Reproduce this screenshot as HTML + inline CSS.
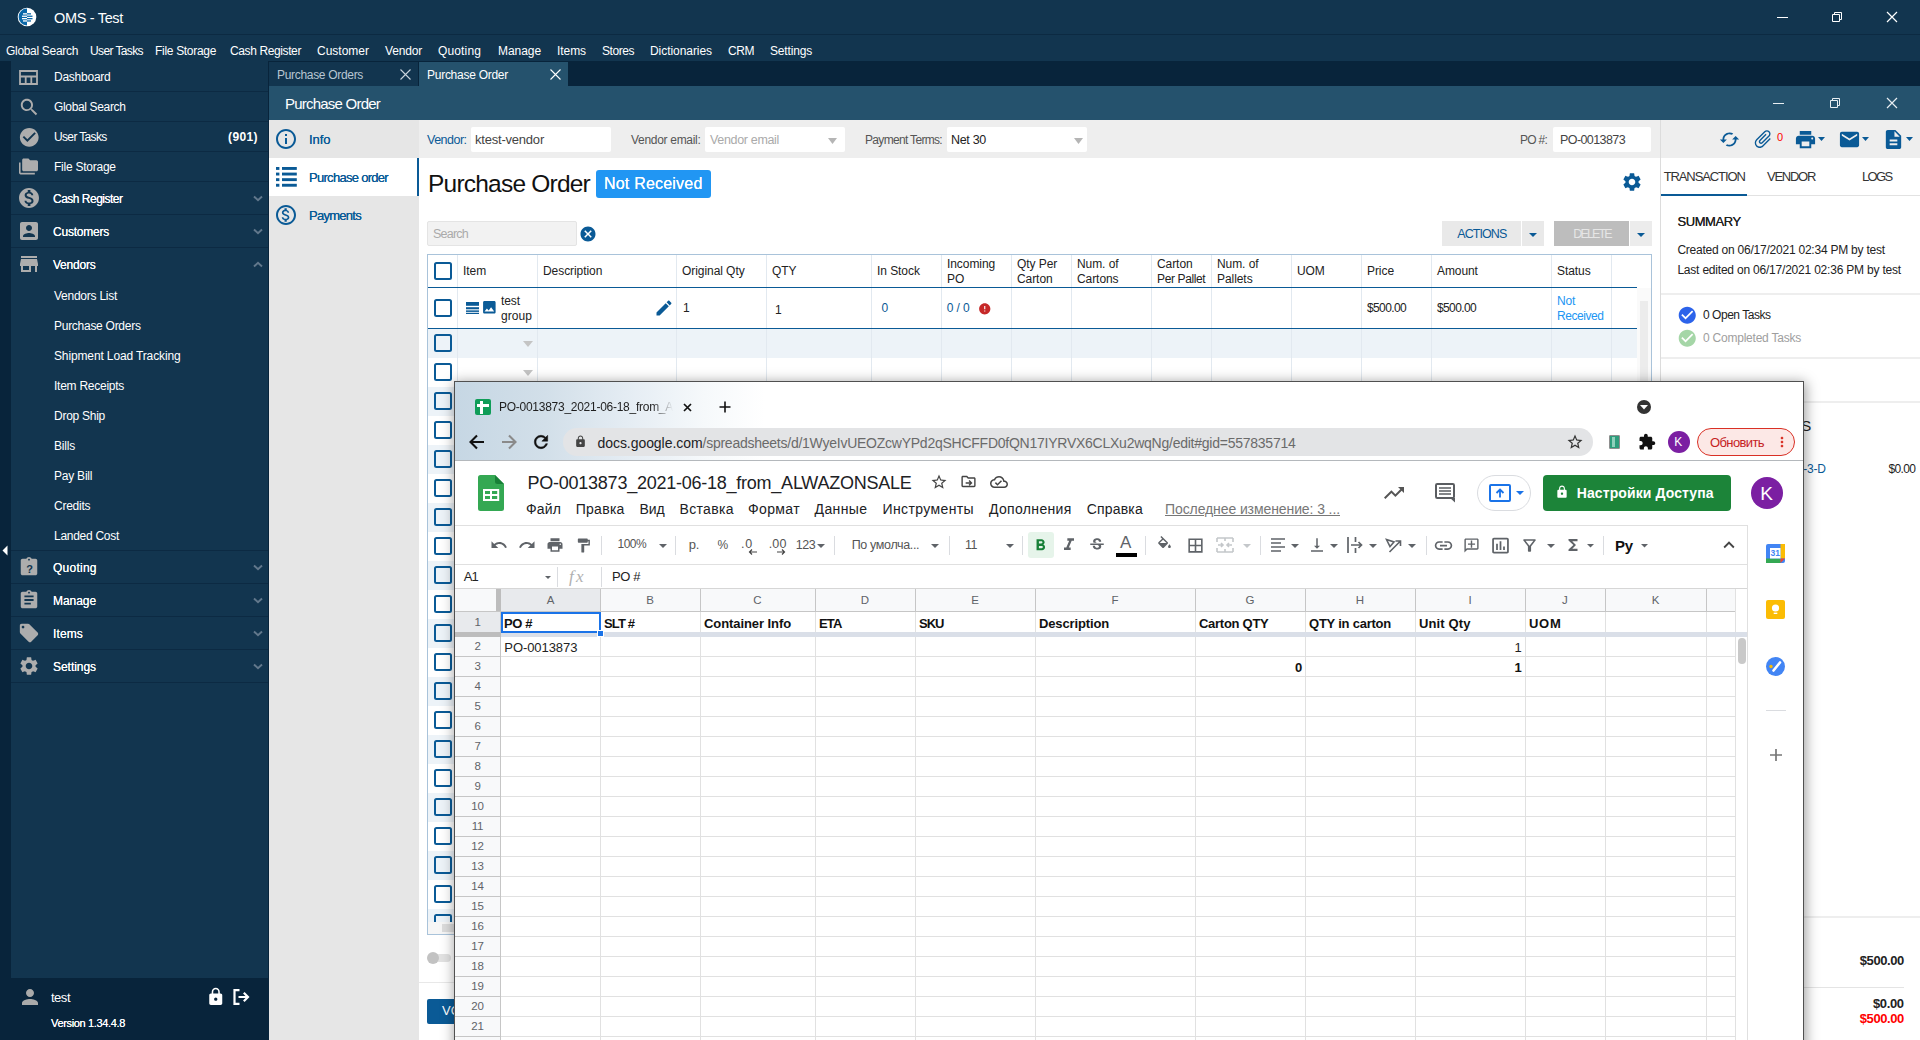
<!DOCTYPE html><html lang="en"><head><meta charset="utf-8"><title>OMS - Test</title><style>
html,body{margin:0;padding:0;}
body{width:1920px;height:1040px;overflow:hidden;position:relative;background:#12354f;font-family:"Liberation Sans",sans-serif;font-size:12px;}
.b{position:absolute;box-sizing:border-box;}
.t{position:absolute;white-space:nowrap;}
.i{position:absolute;display:block;}
#root{position:absolute;left:0;top:0;width:1920px;height:1040px;overflow:hidden;}
</style></head><body><div id="root">
<div class="b" style="left:0px;top:0px;width:1920px;height:35px;background:#12354f;border-bottom:1px solid #0c2a42;"></div>
<svg class="i" style="left:17px;top:7px" width="20" height="20" viewBox="0 0 20 20"><circle cx="10" cy="10" r="9.3" fill="#fff"/><path d="M10 1.6A8.4 8.4 0 0 0 10 18.4z" fill="#0a67a8"/><rect x="6" y="6.2" width="8" height="1.3" fill="#fff"/><rect x="5" y="8.6" width="10.5" height="1.3" fill="#fff"/><rect x="5" y="11" width="10.5" height="1.3" fill="#fff"/><rect x="6" y="13.3" width="8" height="1.3" fill="#fff"/><rect x="10" y="6.2" width="4" height="1.3" fill="#0a67a8"/><rect x="10" y="8.6" width="5.5" height="1.3" fill="#0a67a8"/><rect x="10" y="11" width="5.500" height="1.3" fill="#0a67a8"/><rect x="10" y="13.3" width="4" height="1.3" fill="#0a67a8"/></svg>
<span class="t" style="top:8.0px;font-size:14.5px;line-height:20px;color:#fff;left:54.0px;letter-spacing:-0.325px;">OMS - Test</span>
<div class="b" style="left:1777px;top:17px;width:11px;height:1px;background:#fff;"></div><svg class="i" style="left:1831px;top:11px" width="12" height="12" viewBox="0 0 12 12"><path d="M1.500 3.500h7v7h-7z M3.500 3.500v-2h7v7h-2" fill="none" stroke="#fff" stroke-width="1"/></svg><svg class="i" style="left:1886px;top:11px" width="12" height="12" viewBox="0 0 12 12"><path d="M1 1l10 10M11 1L1 11" fill="none" stroke="#fff" stroke-width="1.2"/></svg>
<span class="t" style="top:42.5px;font-size:12px;line-height:17px;color:#fff;left:6.0px;letter-spacing:-0.311px;">Global Search</span>
<span class="t" style="top:42.5px;font-size:12px;line-height:17px;color:#fff;left:90.0px;letter-spacing:-0.613px;">User Tasks</span>
<span class="t" style="top:42.5px;font-size:12px;line-height:17px;color:#fff;left:155.0px;letter-spacing:-0.308px;">File Storage</span>
<span class="t" style="top:42.5px;font-size:12px;line-height:17px;color:#fff;left:230.0px;letter-spacing:-0.387px;">Cash Register</span>
<span class="t" style="top:42.5px;font-size:12px;line-height:17px;color:#fff;left:317.0px;">Customer</span>
<span class="t" style="top:42.5px;font-size:12px;line-height:17px;color:#fff;left:385.0px;letter-spacing:-0.172px;">Vendor</span>
<span class="t" style="top:42.5px;font-size:12px;line-height:17px;color:#fff;left:438.0px;letter-spacing:0.139px;">Quoting</span>
<span class="t" style="top:42.5px;font-size:12px;line-height:17px;color:#fff;left:498.0px;letter-spacing:-0.061px;">Manage</span>
<span class="t" style="top:42.5px;font-size:12px;line-height:17px;color:#fff;left:557.0px;letter-spacing:-0.068px;">Items</span>
<span class="t" style="top:42.5px;font-size:12px;line-height:17px;color:#fff;left:602.0px;letter-spacing:-0.447px;">Stores</span>
<span class="t" style="top:42.5px;font-size:12px;line-height:17px;color:#fff;left:650.0px;letter-spacing:-0.057px;">Dictionaries</span>
<span class="t" style="top:42.5px;font-size:12px;line-height:17px;color:#fff;left:728.0px;letter-spacing:-0.443px;">CRM</span>
<span class="t" style="top:42.5px;font-size:12px;line-height:17px;color:#fff;left:770.0px;letter-spacing:-0.170px;">Settings</span>
<div class="b" style="left:0px;top:61px;width:1920px;height:979px;background:#08243b;"></div>
<div class="b" style="left:11px;top:61px;width:257px;height:917px;background:#12354f;"></div>
<svg class="i" style="left:2px;top:545px" width="6" height="11" viewBox="0 0 6 11"><path d="M5.500 0.500v10L0.500 5.500z" fill="#fff"/></svg>
<div class="b" style="left:11px;top:91px;width:257px;height:1px;background:#0c2a43;"></div>
<span class="t" style="top:68.5px;font-size:12px;line-height:17px;color:#fff;left:54.0px;letter-spacing:-0.245px;">Dashboard</span>
<svg class="i" style="left:19px;top:69.5px" width="19" height="15" viewBox="0 0 19 15"><path d="M1 1h17v13H1z M1 6.500h17 M6.700 6.500v7.500 M12.300 6.500v7.500" fill="none" stroke="#adadad" stroke-width="1.800"/></svg>
<div class="b" style="left:11px;top:121px;width:257px;height:1px;background:#0c2a43;"></div>
<span class="t" style="top:98.5px;font-size:12px;line-height:17px;color:#fff;left:54.0px;letter-spacing:-0.349px;">Global Search</span>
<svg class="i" style="left:17.5px;top:95.5px;" width="22.5" height="22.5" viewBox="0 0 24 24"><path fill="#adadad" d="M15.5 14h-.79l-.28-.27C15.41 12.59 16 11.11 16 9.5 16 5.91 13.09 3 9.5 3S3 5.91 3 9.5 5.91 16 9.5 16c1.61 0 3.09-.59 4.23-1.57l.27.28v.79l5 4.99L20.49 19l-4.99-5zm-6 0C7.01 14 5 11.99 5 9.5S7.01 5 9.5 5 14 7.01 14 9.5 11.99 14 9.5 14z"/></svg>
<div class="b" style="left:11px;top:151px;width:257px;height:1px;background:#0c2a43;"></div>
<span class="t" style="top:128.5px;font-size:12px;line-height:17px;color:#fff;left:54.0px;letter-spacing:-0.653px;">User Tasks</span>
<svg class="i" style="left:17.5px;top:125.5px;" width="22.5" height="22.5" viewBox="0 0 24 24"><path fill="#adadad" d="M12 2C6.48 2 2 6.48 2 12s4.48 10 10 10 10-4.48 10-10S17.52 2 12 2zm-2 15l-5-5 1.41-1.41L10 14.17l7.59-7.59L19 8l-9 9z"/></svg>
<div class="b" style="left:11px;top:181px;width:257px;height:1px;background:#0c2a43;"></div>
<span class="t" style="top:158.5px;font-size:12px;line-height:17px;color:#fff;left:54.0px;letter-spacing:-0.243px;">File Storage</span>
<svg class="i" style="left:19px;top:157px;" width="19" height="19" viewBox="0 0 24 24"><path fill="#adadad" d="M2 7H0v13c0 1.1.9 2 2 2h18v-2H2V7zm20-3h-8l-2-2H6c-1.1 0-2 .9-2 2v12c0 1.1.9 2 2 2h16c1.1 0 2-.9 2-2V6c0-1.1-.9-2-2-2z"/></svg>
<span class="t" style="top:128.5px;font-size:12px;line-height:17px;color:#fff;left:228.0px;letter-spacing:0.397px;font-weight:700;">(901)</span>
<div class="b" style="left:11px;top:214px;width:257px;height:1px;background:#0c2a43;"></div>
<span class="t" style="top:191.0px;font-size:12px;line-height:17px;color:#fff;left:53.0px;letter-spacing:-0.502px;text-shadow:0 0 0.4px #fff;">Cash Register</span>
<svg class="i" style="left:17px;top:186px;" width="24" height="24" viewBox="0 0 24 24"><path fill="#adadad" d="M12 2C6.48 2 2 6.48 2 12s4.48 10 10 10 10-4.48 10-10S17.52 2 12 2zm1.41 16.09V20h-2.67v-1.93c-1.71-.36-3.16-1.46-3.27-3.4h1.96c.1 1.05.82 1.87 2.65 1.87 1.96 0 2.4-.98 2.4-1.59 0-.83-.44-1.61-2.67-2.14-2.48-.6-4.18-1.62-4.18-3.67 0-1.72 1.39-2.84 3.11-3.21V4h2.67v1.95c1.86.45 2.79 1.86 2.85 3.39H14.3c-.05-1.11-.64-1.87-2.22-1.87-1.5 0-2.4.68-2.4 1.64 0 .84.65 1.39 2.67 1.91s4.18 1.39 4.18 3.91c-.01 1.83-1.38 2.83-3.12 3.16z"/></svg>
<svg class="i" style="left:252.5px;top:195px" width="10" height="7" viewBox="0 0 10 7"><path d="M1 1.500L5 5.300L9 1.500" fill="none" stroke="#62788c" stroke-width="1.900"/></svg>
<div class="b" style="left:11px;top:247px;width:257px;height:1px;background:#0c2a43;"></div>
<span class="t" style="top:224.0px;font-size:12px;line-height:17px;color:#fff;left:53.0px;letter-spacing:-0.226px;text-shadow:0 0 0.4px #fff;">Customers</span>
<svg class="i" style="left:17px;top:219px;" width="24" height="24" viewBox="0 0 24 24"><path fill="#adadad" d="M3 5v14c0 1.1.89 2 2 2h14c1.1 0 2-.9 2-2V5c0-1.1-.9-2-2-2H5c-1.11 0-2 .9-2 2zm12 4c0 1.66-1.34 3-3 3s-3-1.34-3-3 1.34-3 3-3 3 1.34 3 3zm-9 8c0-2 4-3.1 6-3.1s6 1.1 6 3.1v1H6v-1z"/></svg>
<svg class="i" style="left:252.5px;top:228px" width="10" height="7" viewBox="0 0 10 7"><path d="M1 1.500L5 5.300L9 1.500" fill="none" stroke="#62788c" stroke-width="1.900"/></svg>
<span class="t" style="top:257.0px;font-size:12px;line-height:17px;color:#fff;left:53.0px;letter-spacing:-0.220px;text-shadow:0 0 0.4px #fff;">Vendors</span>
<svg class="i" style="left:17px;top:252px;" width="24" height="24" viewBox="0 0 24 24"><path fill="#adadad" d="M20 4H4v2h16V4zm1 10v-2l-1-5H4l-1 5v2h1v6h10v-6h4v6h2v-6h1zm-9 4H6v-4h6v4z"/></svg>
<svg class="i" style="left:252.5px;top:261px" width="10" height="7" viewBox="0 0 10 7"><path d="M1 5.500L5 1.700L9 5.500" fill="none" stroke="#62788c" stroke-width="1.900"/></svg>
<span class="t" style="top:287.5px;font-size:12px;line-height:17px;color:#fff;left:54.0px;letter-spacing:-0.248px;">Vendors List</span>
<span class="t" style="top:317.5px;font-size:12px;line-height:17px;color:#fff;left:54.0px;letter-spacing:-0.272px;">Purchase Orders</span>
<span class="t" style="top:347.5px;font-size:12px;line-height:17px;color:#fff;left:54.0px;letter-spacing:-0.132px;">Shipment Load Tracking</span>
<span class="t" style="top:377.5px;font-size:12px;line-height:17px;color:#fff;left:54.0px;letter-spacing:-0.254px;">Item Receipts</span>
<span class="t" style="top:407.5px;font-size:12px;line-height:17px;color:#fff;left:54.0px;letter-spacing:-0.267px;">Drop Ship</span>
<span class="t" style="top:437.5px;font-size:12px;line-height:17px;color:#fff;left:54.0px;letter-spacing:-0.198px;">Bills</span>
<span class="t" style="top:467.5px;font-size:12px;line-height:17px;color:#fff;left:54.0px;letter-spacing:-0.225px;">Pay Bill</span>
<span class="t" style="top:497.5px;font-size:12px;line-height:17px;color:#fff;left:54.0px;letter-spacing:-0.244px;">Credits</span>
<span class="t" style="top:527.5px;font-size:12px;line-height:17px;color:#fff;left:54.0px;letter-spacing:-0.278px;">Landed Cost</span>
<div class="b" style="left:11px;top:550px;width:257px;height:1px;background:#0c2a43;"></div>
<div class="b" style="left:11px;top:583px;width:257px;height:1px;background:#0c2a43;"></div>
<span class="t" style="top:560.0px;font-size:12px;line-height:17px;color:#fff;left:53.0px;letter-spacing:0.239px;text-shadow:0 0 0.4px #fff;">Quoting</span>
<svg class="i" style="left:18px;top:556px;" width="22" height="22" viewBox="0 0 24 24"><path fill="#adadad" d="M19 3h-4.18C14.4 1.84 13.3 1 12 1c-1.3 0-2.4.84-2.82 2H5c-1.1 0-2 .9-2 2v14c0 1.1.9 2 2 2h14c1.1 0 2-.9 2-2V5c0-1.1-.9-2-2-2zm-7 0c.55 0 1 .45 1 1s-.45 1-1 1-1-.45-1-1 .45-1 1-1z"/></svg>
<span class="t" style="top:562.0px;font-size:11px;line-height:15px;color:#12354f;left:26.2px;font-weight:700;">?</span>
<svg class="i" style="left:252.5px;top:564px" width="10" height="7" viewBox="0 0 10 7"><path d="M1 1.500L5 5.300L9 1.500" fill="none" stroke="#62788c" stroke-width="1.900"/></svg>
<div class="b" style="left:11px;top:616px;width:257px;height:1px;background:#0c2a43;"></div>
<span class="t" style="top:593.0px;font-size:12px;line-height:17px;color:#fff;left:53.0px;letter-spacing:-0.061px;text-shadow:0 0 0.4px #fff;">Manage</span>
<svg class="i" style="left:18px;top:589px;" width="22" height="22" viewBox="0 0 24 24"><path fill="#adadad" d="M19 3h-4.18C14.4 1.84 13.3 1 12 1c-1.3 0-2.4.84-2.82 2H5c-1.1 0-2 .9-2 2v14c0 1.1.9 2 2 2h14c1.1 0 2-.9 2-2V5c0-1.1-.9-2-2-2zm-7 0c.55 0 1 .45 1 1s-.45 1-1 1-1-.45-1-1 .45-1 1-1zm2 14H7v-2h7v2zm3-4H7v-2h10v2zm0-4H7V7h10v2z"/></svg>
<svg class="i" style="left:252.5px;top:597px" width="10" height="7" viewBox="0 0 10 7"><path d="M1 1.500L5 5.300L9 1.500" fill="none" stroke="#62788c" stroke-width="1.900"/></svg>
<div class="b" style="left:11px;top:649px;width:257px;height:1px;background:#0c2a43;"></div>
<span class="t" style="top:626.0px;font-size:12px;line-height:17px;color:#fff;left:53.0px;letter-spacing:0.132px;text-shadow:0 0 0.4px #fff;">Items</span>
<svg class="i" style="left:18px;top:622px;" width="22" height="22" viewBox="0 0 24 24"><path fill="#adadad" d="M21.41 11.58l-9-9C12.05 2.22 11.55 2 11 2H4c-1.1 0-2 .9-2 2v7c0 .55.22 1.05.59 1.42l9 9c.36.36.86.58 1.41.58.55 0 1.05-.22 1.41-.59l7-7c.37-.36.59-.86.59-1.41 0-.55-.23-1.06-.59-1.42zM5.5 7C4.67 7 4 6.33 4 5.5S4.67 4 5.5 4 7 4.67 7 5.5 6.33 7 5.5 7z"/></svg>
<svg class="i" style="left:252.5px;top:630px" width="10" height="7" viewBox="0 0 10 7"><path d="M1 1.500L5 5.300L9 1.500" fill="none" stroke="#62788c" stroke-width="1.900"/></svg>
<div class="b" style="left:11px;top:682px;width:257px;height:1px;background:#0c2a43;"></div>
<span class="t" style="top:659.0px;font-size:12px;line-height:17px;color:#fff;left:53.0px;letter-spacing:-0.045px;text-shadow:0 0 0.4px #fff;">Settings</span>
<svg class="i" style="left:18px;top:655px;" width="22" height="22" viewBox="0 0 24 24"><path fill="#adadad" d="M19.14 12.94c.04-.3.06-.61.06-.94 0-.32-.02-.64-.07-.94l2.03-1.58c.18-.14.23-.41.12-.61l-1.92-3.32c-.12-.22-.37-.29-.59-.22l-2.39.96c-.5-.38-1.03-.7-1.62-.94l-.36-2.54c-.04-.24-.24-.41-.48-.41h-3.84c-.24 0-.43.17-.47.41l-.36 2.54c-.59.24-1.13.57-1.62.94l-2.39-.96c-.22-.08-.47 0-.59.22L2.74 8.87c-.12.21-.08.47.12.61l2.03 1.58c-.05.3-.09.63-.09.94s.02.64.07.94l-2.03 1.58c-.18.14-.23.41-.12.61l1.92 3.32c.12.22.37.29.59.22l2.39-.96c.5.38 1.03.7 1.62.94l.36 2.54c.05.24.24.41.48.41h3.84c.24 0 .44-.17.47-.41l.36-2.54c.59-.24 1.13-.56 1.62-.94l2.39.96c.22.08.47 0 .59-.22l1.92-3.32c.12-.22.07-.47-.12-.61l-2.01-1.58zM12 15.6c-1.98 0-3.6-1.62-3.6-3.6s1.62-3.6 3.6-3.6 3.6 1.62 3.6 3.6-1.62 3.6-3.6 3.6z"/></svg>
<svg class="i" style="left:252.5px;top:663px" width="10" height="7" viewBox="0 0 10 7"><path d="M1 1.500L5 5.300L9 1.500" fill="none" stroke="#62788c" stroke-width="1.900"/></svg>
<svg class="i" style="left:18px;top:985px;" width="24" height="24" viewBox="0 0 24 24"><path fill="#aaaaaa" d="M12 12c2.21 0 4-1.79 4-4s-1.79-4-4-4-4 1.79-4 4 1.79 4 4 4zm0 2c-2.67 0-8 1.34-8 4v2h16v-2c0-2.66-5.33-4-8-4z"/></svg>
<span class="t" style="top:989.0px;font-size:13px;line-height:18px;color:#fff;left:51.0px;letter-spacing:-0.488px;">test</span>
<span class="t" style="top:1016.0px;font-size:11px;line-height:15px;color:#fff;left:51.0px;letter-spacing:-0.344px;text-shadow:0 0 0.3px #fff;">Version 1.34.4.8</span>
<svg class="i" style="left:205.5px;top:986.5px;" width="19.5" height="19.5" viewBox="0 0 24 24"><path fill="#fff" d="M18 8h-1V6c0-2.76-2.24-5-5-5S7 3.24 7 6v2H6c-1.1 0-2 .9-2 2v10c0 1.1.9 2 2 2h12c1.1 0 2-.9 2-2V10c0-1.1-.9-2-2-2zm-6 9c-1.1 0-2-.9-2-2s.9-2 2-2 2 .9 2 2-.9 2-2 2zm3.1-9H8.9V6c0-1.71 1.39-3.1 3.1-3.1 1.71 0 3.1 1.39 3.1 3.1v2z"/></svg>
<svg class="i" style="left:233px;top:989px" width="18" height="16" viewBox="0 0 18 16"><path d="M6.500 1.200H1.500v13.600h5" fill="none" stroke="#fff" stroke-width="2.200"/><path d="M5.500 8h9 M10.800 3.800L15 8l-4.200 4.200" fill="none" stroke="#fff" stroke-width="2.200"/></svg>
<div class="b" style="left:269px;top:62px;width:149px;height:24px;background:#12354f;"></div>
<span class="t" style="top:66.5px;font-size:12px;line-height:17px;color:#b8c6d2;left:277.0px;letter-spacing:-0.314px;">Purchase Orders</span>
<svg class="i" style="left:400px;top:69px" width="11" height="11" viewBox="0 0 11 11"><path d="M0.500 0.500l10 10M10.500 0.500l-10 10" stroke="#c9d4dd" stroke-width="1.100" fill="none"/></svg>
<div class="b" style="left:419px;top:62px;width:149px;height:24px;background:#25526d;"></div>
<span class="t" style="top:66.5px;font-size:12px;line-height:17px;color:#fff;left:427.0px;letter-spacing:-0.265px;">Purchase Order</span>
<svg class="i" style="left:550px;top:69px" width="11" height="11" viewBox="0 0 11 11"><path d="M0.500 0.500l10 10M10.500 0.500l-10 10" stroke="#fff" stroke-width="1.100" fill="none"/></svg>
<div class="b" style="left:269px;top:86px;width:1651px;height:34px;background:#25526d;"></div>
<span class="t" style="top:93.0px;font-size:15px;line-height:21px;color:#fff;left:285.0px;letter-spacing:-0.777px;">Purchase Order</span>
<div class="b" style="left:1773px;top:103px;width:11px;height:1px;background:#e8eef2;"></div><svg class="i" style="left:1829px;top:97px" width="12" height="12" viewBox="0 0 12 12"><path d="M1.500 3.500h7v7h-7z M3.500 3.500v-2h7v7h-2" fill="none" stroke="#e8eef2" stroke-width="1"/></svg><svg class="i" style="left:1886px;top:97px" width="12" height="12" viewBox="0 0 12 12"><path d="M1 1l10 10M11 1L1 11" fill="none" stroke="#e8eef2" stroke-width="1.2"/></svg>
<div class="b" style="left:269px;top:120px;width:150px;height:920px;background:#e6e6e6;"></div>
<div class="b" style="left:269px;top:158px;width:150px;height:38px;background:#fff;border-right:2px solid #0a5a96;"></div>
<svg class="i" style="left:274.3px;top:127px;" width="24" height="24" viewBox="0 0 24 24"><path fill="#0a5a96" d="M11 7h2v2h-2zm0 4h2v6h-2zm1-9C6.48 2 2 6.48 2 12s4.48 10 10 10 10-4.48 10-10S17.52 2 12 2zm0 18c-4.41 0-8-3.59-8-8s3.59-8 8-8 8 3.59 8 8-3.59 8-8 8z"/></svg>
<span class="t" style="top:130.5px;font-size:13px;line-height:18px;color:#0a5a96;left:309.0px;letter-spacing:-0.046px;text-shadow:0 0 0.5px #0a5a96;">Info</span>
<svg class="i" style="left:276px;top:167px" width="21" height="20" viewBox="0 0 21 20"><rect x="0" y="0" width="3.400" height="2.900" fill="#0a5a96"/><rect x="6" y="0" width="14.800" height="2.900" fill="#0a5a96"/><rect x="0" y="5.6" width="3.400" height="2.900" fill="#0a5a96"/><rect x="6" y="5.6" width="14.800" height="2.900" fill="#0a5a96"/><rect x="0" y="11.2" width="3.400" height="2.900" fill="#0a5a96"/><rect x="6" y="11.2" width="14.800" height="2.900" fill="#0a5a96"/><rect x="0" y="16.8" width="3.400" height="2.900" fill="#0a5a96"/><rect x="6" y="16.8" width="14.800" height="2.900" fill="#0a5a96"/></svg>
<span class="t" style="top:168.5px;font-size:13px;line-height:18px;color:#0a5a96;left:309.0px;letter-spacing:-0.706px;text-shadow:0 0 0.5px #0a5a96;">Purchase order</span>
<svg class="i" style="left:274.3px;top:203px;" width="24" height="24" viewBox="0 0 24 24"><path fill="#0a5a96" d="M12 2C6.48 2 2 6.48 2 12s4.48 10 10 10 10-4.48 10-10S17.52 2 12 2zm0 18c-4.41 0-8-3.59-8-8s3.59-8 8-8 8 3.59 8 8-3.59 8-8 8z"/></svg>
<svg class="i" style="left:277.3px;top:206px;" width="18" height="18" viewBox="0 0 24 24"><path fill="#0a5a96" d="M11.8 10.9c-2.27-.59-3-1.2-3-2.15 0-1.09 1.01-1.85 2.7-1.85 1.78 0 2.44.85 2.5 2.1h2.21c-.07-1.72-1.12-3.3-3.21-3.81V3h-3v2.16c-1.94.42-3.5 1.68-3.5 3.61 0 2.31 1.91 3.46 4.7 4.13 2.5.6 3 1.48 3 2.41 0 .69-.49 1.79-2.7 1.79-2.06 0-2.87-.92-2.98-2.1h-2.2c.12 2.19 1.76 3.42 3.68 3.83V21h3v-2.15c1.95-.37 3.5-1.5 3.5-3.55 0-2.84-2.43-3.81-4.7-4.4z"/></svg>
<span class="t" style="top:206.5px;font-size:13px;line-height:18px;color:#0a5a96;left:309.0px;letter-spacing:-0.725px;text-shadow:0 0 0.5px #0a5a96;">Payments</span>
<div class="b" style="left:419px;top:120px;width:1241px;height:920px;background:#fff;"></div>
<div class="b" style="left:419px;top:120px;width:1501px;height:38px;background:#eeeeee;"></div>
<span class="t" style="top:130.5px;font-size:12.5px;line-height:18px;color:#0a5a96;left:427.0px;letter-spacing:-0.513px;">Vendor:</span>
<div class="b" style="left:471px;top:127px;width:140px;height:25px;background:#fff;border-radius:2px;"></div>
<span class="t" style="top:130.5px;font-size:13px;line-height:18px;color:#444;left:475.0px;letter-spacing:-0.211px;">ktest-vendor</span>
<span class="t" style="top:132.0px;font-size:12px;line-height:17px;color:#555;left:631.0px;letter-spacing:-0.298px;">Vendor email:</span>
<div class="b" style="left:705px;top:127px;width:140px;height:25px;background:#fff;border-radius:2px;"></div>
<span class="t" style="top:130.5px;font-size:12.5px;line-height:18px;color:#aaa;left:710.0px;letter-spacing:-0.330px;">Vendor email</span>
<svg class="i" style="left:827.5px;top:137.5px" width="9" height="6" viewBox="0 0 9 6"><path d="M0 0h9L4.5 6z" fill="#b5b5b5"/></svg>
<span class="t" style="top:132.0px;font-size:12px;line-height:17px;color:#555;left:865.0px;letter-spacing:-0.677px;">Payment Terms:</span>
<div class="b" style="left:947px;top:127px;width:140px;height:25px;background:#fff;border-radius:2px;"></div>
<span class="t" style="top:130.5px;font-size:12.5px;line-height:18px;color:#222;left:951.0px;letter-spacing:-0.305px;">Net 30</span>
<svg class="i" style="left:1073.5px;top:137.5px" width="9" height="6" viewBox="0 0 9 6"><path d="M0 0h9L4.5 6z" fill="#b5b5b5"/></svg>
<span class="t" style="top:132.0px;font-size:12px;line-height:17px;color:#555;left:1520.0px;letter-spacing:-0.736px;">PO #:</span>
<div class="b" style="left:1553px;top:127px;width:98px;height:25px;background:#fff;border-radius:2px;"></div>
<span class="t" style="top:130.5px;font-size:12.5px;line-height:18px;color:#444;left:1560.0px;letter-spacing:-0.589px;">PO-0013873</span>
<span class="t" style="top:166.5px;font-size:24.5px;line-height:34px;color:#111;left:428.0px;letter-spacing:-0.781px;">Purchase Order</span>
<div class="b" style="left:596px;top:169.5px;width:115px;height:28px;background:#2196f3;border-radius:3px;"></div>
<span class="t" style="top:173.0px;font-size:16px;line-height:22px;color:#fff;left:604.0px;letter-spacing:0.204px;text-shadow:0 0 0.6px #fff;">Not Received</span>
<svg class="i" style="left:1621px;top:170.5px;" width="22" height="22" viewBox="0 0 24 24"><path fill="#0a5a96" d="M19.14 12.94c.04-.3.06-.61.06-.94 0-.32-.02-.64-.07-.94l2.03-1.58c.18-.14.23-.41.12-.61l-1.92-3.32c-.12-.22-.37-.29-.59-.22l-2.39.96c-.5-.38-1.03-.7-1.62-.94l-.36-2.54c-.04-.24-.24-.41-.48-.41h-3.84c-.24 0-.43.17-.47.41l-.36 2.54c-.59.24-1.13.57-1.62.94l-2.39-.96c-.22-.08-.47 0-.59.22L2.74 8.87c-.12.21-.08.47.12.61l2.03 1.58c-.05.3-.09.63-.09.94s.02.64.07.94l-2.03 1.58c-.18.14-.23.41-.12.61l1.92 3.32c.12.22.37.29.59.22l2.39-.96c.5.38 1.03.7 1.62.94l.36 2.54c.05.24.24.41.48.41h3.84c.24 0 .44-.17.47-.41l.36-2.54c.59-.24 1.13-.56 1.62-.94l2.39.96c.22.08.47 0 .59-.22l1.92-3.32c.12-.22.07-.47-.12-.61l-2.01-1.58zM12 15.6c-1.98 0-3.6-1.62-3.6-3.6s1.62-3.6 3.6-3.6 3.6 1.62 3.6 3.6-1.62 3.6-3.6 3.6z"/></svg>
<div class="b" style="left:427px;top:221px;width:150px;height:25px;background:#f2f2f2;border:1px solid #e4e4e4;border-radius:2px;"></div>
<span class="t" style="top:224.5px;font-size:12.5px;line-height:18px;color:#aaa;left:433.0px;letter-spacing:-0.768px;">Search</span>
<svg class="i" style="left:579px;top:224.5px;" width="18" height="18" viewBox="0 0 24 24"><path fill="#0a5a96" d="M12 2C6.47 2 2 6.47 2 12s4.47 10 10 10 10-4.47 10-10S17.53 2 12 2zm5 13.59L15.59 17 12 13.41 8.41 17 7 15.59 10.59 12 7 8.41 8.41 7 12 10.59 15.59 7 17 8.41 13.41 12 17 15.59z"/></svg>
<div class="b" style="left:1442px;top:221px;width:79px;height:25px;background:#e9e9e9;"></div>
<span class="t" style="top:224.5px;font-size:12.5px;line-height:18px;color:#0a5a96;left:1457.3px;letter-spacing:-0.937px;">ACTIONS</span>
<div class="b" style="left:1522px;top:221px;width:22px;height:25px;background:#e9e9e9;"></div>
<svg class="i" style="left:1528.7px;top:232.5px" width="8" height="4" viewBox="0 0 8 4"><path d="M0 0h8L4.0 4z" fill="#0a5a96"/></svg>
<div class="b" style="left:1554px;top:221px;width:75px;height:25px;background:#bdbdbd;"></div>
<span class="t" style="top:224.5px;font-size:12.5px;line-height:18px;color:#e6e6e6;left:1573.3px;letter-spacing:-1.855px;">DELETE</span>
<div class="b" style="left:1630px;top:221px;width:22px;height:25px;background:#ececec;"></div>
<svg class="i" style="left:1637.0px;top:232.5px" width="8" height="4" viewBox="0 0 8 4"><path d="M0 0h8L4.0 4z" fill="#0a5a96"/></svg>
<div class="b" style="left:427px;top:254px;width:1225px;height:681px;background:#fff;border:1px solid #a9c3da;"></div>
<div class="b" style="left:428px;top:329px;width:1209px;height:29px;background:#edf3f8;"></div>
<div class="b" style="left:428px;top:387px;width:1209px;height:29px;background:#edf3f8;"></div>
<div class="b" style="left:428px;top:445px;width:1209px;height:29px;background:#edf3f8;"></div>
<div class="b" style="left:428px;top:503px;width:1209px;height:29px;background:#edf3f8;"></div>
<div class="b" style="left:428px;top:561px;width:1209px;height:29px;background:#edf3f8;"></div>
<div class="b" style="left:428px;top:619px;width:1209px;height:29px;background:#edf3f8;"></div>
<div class="b" style="left:428px;top:677px;width:1209px;height:29px;background:#edf3f8;"></div>
<div class="b" style="left:428px;top:735px;width:1209px;height:29px;background:#edf3f8;"></div>
<div class="b" style="left:428px;top:793px;width:1209px;height:29px;background:#edf3f8;"></div>
<div class="b" style="left:428px;top:851px;width:1209px;height:29px;background:#edf3f8;"></div>
<div class="b" style="left:428px;top:909px;width:1209px;height:13px;background:#edf3f8;"></div>
<div class="b" style="left:457px;top:255px;width:1px;height:667px;background:#e2e9f0;"></div>
<div class="b" style="left:537px;top:255px;width:1px;height:667px;background:#e2e9f0;"></div>
<div class="b" style="left:676px;top:255px;width:1px;height:667px;background:#e2e9f0;"></div>
<div class="b" style="left:766px;top:255px;width:1px;height:667px;background:#e2e9f0;"></div>
<div class="b" style="left:871px;top:255px;width:1px;height:667px;background:#e2e9f0;"></div>
<div class="b" style="left:941px;top:255px;width:1px;height:667px;background:#e2e9f0;"></div>
<div class="b" style="left:1011px;top:255px;width:1px;height:667px;background:#e2e9f0;"></div>
<div class="b" style="left:1071px;top:255px;width:1px;height:667px;background:#e2e9f0;"></div>
<div class="b" style="left:1151px;top:255px;width:1px;height:667px;background:#e2e9f0;"></div>
<div class="b" style="left:1211px;top:255px;width:1px;height:667px;background:#e2e9f0;"></div>
<div class="b" style="left:1291px;top:255px;width:1px;height:667px;background:#e2e9f0;"></div>
<div class="b" style="left:1361px;top:255px;width:1px;height:667px;background:#e2e9f0;"></div>
<div class="b" style="left:1431px;top:255px;width:1px;height:667px;background:#e2e9f0;"></div>
<div class="b" style="left:1551px;top:255px;width:1px;height:667px;background:#e2e9f0;"></div>
<div class="b" style="left:1611px;top:255px;width:1px;height:667px;background:#e2e9f0;"></div>
<div class="b" style="left:428px;top:287px;width:1209px;height:1px;background:#0a5a96;"></div>
<div class="b" style="left:428px;top:328px;width:1209px;height:1px;background:#0a5a96;"></div>
<div class="b" style="left:1637px;top:288px;width:14px;height:634px;background:#fafafa;"></div>
<div class="b" style="left:1640px;top:301px;width:8px;height:200px;background:#ececec;"></div>
<div class="b" style="left:428px;top:922px;width:1223px;height:12px;background:#f6f6f6;"></div>
<div class="b" style="left:442px;top:924px;width:300px;height:8px;background:#dcdcdc;"></div>
<div class="b" style="left:434px;top:262px;width:18px;height:18px;border:2px solid #0a5a96;border-radius:2.500px;"></div>
<div class="b" style="left:434px;top:299px;width:18px;height:18px;border:2px solid #0a5a96;border-radius:2.500px;"></div>
<div class="b" style="left:434px;top:334px;width:18px;height:18px;border:2px solid #0a5a96;border-radius:2.500px;"></div>
<div class="b" style="left:434px;top:363px;width:18px;height:18px;border:2px solid #0a5a96;border-radius:2.500px;"></div>
<div class="b" style="left:434px;top:392px;width:18px;height:18px;border:2px solid #0a5a96;border-radius:2.500px;"></div>
<div class="b" style="left:434px;top:421px;width:18px;height:18px;border:2px solid #0a5a96;border-radius:2.500px;"></div>
<div class="b" style="left:434px;top:450px;width:18px;height:18px;border:2px solid #0a5a96;border-radius:2.500px;"></div>
<div class="b" style="left:434px;top:479px;width:18px;height:18px;border:2px solid #0a5a96;border-radius:2.500px;"></div>
<div class="b" style="left:434px;top:508px;width:18px;height:18px;border:2px solid #0a5a96;border-radius:2.500px;"></div>
<div class="b" style="left:434px;top:537px;width:18px;height:18px;border:2px solid #0a5a96;border-radius:2.500px;"></div>
<div class="b" style="left:434px;top:566px;width:18px;height:18px;border:2px solid #0a5a96;border-radius:2.500px;"></div>
<div class="b" style="left:434px;top:595px;width:18px;height:18px;border:2px solid #0a5a96;border-radius:2.500px;"></div>
<div class="b" style="left:434px;top:624px;width:18px;height:18px;border:2px solid #0a5a96;border-radius:2.500px;"></div>
<div class="b" style="left:434px;top:653px;width:18px;height:18px;border:2px solid #0a5a96;border-radius:2.500px;"></div>
<div class="b" style="left:434px;top:682px;width:18px;height:18px;border:2px solid #0a5a96;border-radius:2.500px;"></div>
<div class="b" style="left:434px;top:711px;width:18px;height:18px;border:2px solid #0a5a96;border-radius:2.500px;"></div>
<div class="b" style="left:434px;top:740px;width:18px;height:18px;border:2px solid #0a5a96;border-radius:2.500px;"></div>
<div class="b" style="left:434px;top:769px;width:18px;height:18px;border:2px solid #0a5a96;border-radius:2.500px;"></div>
<div class="b" style="left:434px;top:798px;width:18px;height:18px;border:2px solid #0a5a96;border-radius:2.500px;"></div>
<div class="b" style="left:434px;top:827px;width:18px;height:18px;border:2px solid #0a5a96;border-radius:2.500px;"></div>
<div class="b" style="left:434px;top:856px;width:18px;height:18px;border:2px solid #0a5a96;border-radius:2.500px;"></div>
<div class="b" style="left:434px;top:885px;width:18px;height:18px;border:2px solid #0a5a96;border-radius:2.500px;"></div>
<div class="b" style="left:434px;top:914px;width:18px;height:8px;border:2px solid #0a5a96;border-bottom:none;border-radius:2.500px 2.500px 0 0;"></div>
<svg class="i" style="left:523.0px;top:341.0px" width="10" height="6" viewBox="0 0 10 6"><path d="M0 0h10L5.0 6z" fill="#c4c4c4"/></svg>
<svg class="i" style="left:523.0px;top:370.0px" width="10" height="6" viewBox="0 0 10 6"><path d="M0 0h10L5.0 6z" fill="#c4c4c4"/></svg>
<span class="t" style="top:262.5px;font-size:12px;line-height:17px;color:#222;left:463.0px;letter-spacing:-0.070px;">Item</span>
<span class="t" style="top:262.5px;font-size:12px;line-height:17px;color:#222;left:543.0px;letter-spacing:-0.065px;">Description</span>
<span class="t" style="top:262.5px;font-size:12px;line-height:17px;color:#222;left:682.0px;letter-spacing:-0.063px;">Original Qty</span>
<span class="t" style="top:262.5px;font-size:12px;line-height:17px;color:#222;left:772.0px;letter-spacing:-0.099px;">QTY</span>
<span class="t" style="top:262.5px;font-size:12px;line-height:17px;color:#222;left:877.0px;letter-spacing:-0.065px;">In Stock</span>
<span class="t" style="top:256.0px;font-size:12px;line-height:17px;color:#222;left:947.0px;letter-spacing:-0.073px;">Incoming</span>
<span class="t" style="top:270.5px;font-size:12px;line-height:17px;color:#222;left:947.0px;letter-spacing:-0.104px;">PO</span>
<span class="t" style="top:256.0px;font-size:12px;line-height:17px;color:#222;left:1017.0px;letter-spacing:-0.070px;">Qty Per</span>
<span class="t" style="top:270.5px;font-size:12px;line-height:17px;color:#222;left:1017.0px;letter-spacing:-0.072px;">Carton</span>
<span class="t" style="top:256.0px;font-size:12px;line-height:17px;color:#222;left:1077.0px;letter-spacing:-0.072px;">Num. of</span>
<span class="t" style="top:270.5px;font-size:12px;line-height:17px;color:#222;left:1077.0px;letter-spacing:-0.072px;">Cartons</span>
<span class="t" style="top:256.0px;font-size:12px;line-height:17px;color:#222;left:1157.0px;letter-spacing:-0.072px;">Carton</span>
<span class="t" style="top:270.5px;font-size:12px;line-height:17px;color:#222;left:1157.0px;letter-spacing:-0.373px;">Per Pallet</span>
<span class="t" style="top:256.0px;font-size:12px;line-height:17px;color:#222;left:1217.0px;letter-spacing:-0.072px;">Num. of</span>
<span class="t" style="top:270.5px;font-size:12px;line-height:17px;color:#222;left:1217.0px;letter-spacing:-0.062px;">Pallets</span>
<span class="t" style="top:262.5px;font-size:12px;line-height:17px;color:#222;left:1297.0px;letter-spacing:-0.112px;">UOM</span>
<span class="t" style="top:262.5px;font-size:12px;line-height:17px;color:#222;left:1367.0px;letter-spacing:-0.066px;">Price</span>
<span class="t" style="top:262.5px;font-size:12px;line-height:17px;color:#222;left:1437.0px;letter-spacing:-0.083px;">Amount</span>
<span class="t" style="top:262.5px;font-size:12px;line-height:17px;color:#222;left:1557.0px;letter-spacing:-0.068px;">Status</span>
<svg class="i" style="left:466px;top:301.500px" width="13.300" height="12.200" viewBox="0 0 13.300 12.200"><rect width="13.300" height="3.800" fill="#0a5a96"/><rect y="5.200" width="13.300" height="2.100" fill="#0a5a96"/><rect y="8.400" width="13.300" height="1.500" fill="#0a5a96"/><rect y="10.800" width="13.300" height="1.300" fill="#0a5a96"/></svg>
<svg class="i" style="left:481.1px;top:299.1px;" width="16.7" height="16.7" viewBox="0 0 24 24"><path fill="#0a5a96" d="M21 19V5c0-1.1-.9-2-2-2H5c-1.1 0-2 .9-2 2v14c0 1.1.9 2 2 2h14c1.1 0 2-.9 2-2zM8.5 13.5l2.5 3.01L14.5 12l4.5 6H5l3.5-4.5z"/></svg>
<span class="t" style="top:292.5px;font-size:12px;line-height:17px;color:#222;left:501.0px;letter-spacing:-0.085px;">test</span>
<span class="t" style="top:307.5px;font-size:12px;line-height:17px;color:#222;left:501.0px;letter-spacing:0.062px;">group</span>
<svg class="i" style="left:653.8px;top:297.6px;" width="20" height="20" viewBox="0 0 24 24"><path fill="#0a5a96" d="M3 17.25V21h3.75L17.81 9.94l-3.75-3.75L3 17.25zM20.71 7.04c.39-.39.39-1.02 0-1.41l-2.34-2.34c-.39-.39-1.02-.39-1.41 0l-1.83 1.83 3.75 3.75 1.83-1.83z"/></svg>
<span class="t" style="top:299.5px;font-size:12px;line-height:17px;color:#222;left:683.0px;">1</span>
<span class="t" style="top:302.0px;font-size:12px;line-height:17px;color:#222;left:775.0px;">1</span>
<span class="t" style="top:299.5px;font-size:12px;line-height:17px;color:#0a5a96;left:881.5px;">0</span>
<span class="t" style="top:299.5px;font-size:12px;line-height:17px;color:#0a5a96;left:946.7px;letter-spacing:-0.070px;">0 / 0</span>
<svg class="i" style="left:978px;top:301.5px;" width="13.5" height="13.5" viewBox="0 0 24 24"><path fill="#c62828" d="M12 2C6.48 2 2 6.48 2 12s4.48 10 10 10 10-4.48 10-10S17.52 2 12 2zm1 15h-2v-2h2v2zm0-4h-2V7h2v6z"/></svg>
<span class="t" style="top:299.5px;font-size:12px;line-height:17px;color:#222;left:1367.0px;letter-spacing:-0.625px;">$500.00</span>
<span class="t" style="top:299.5px;font-size:12px;line-height:17px;color:#222;left:1437.0px;letter-spacing:-0.625px;">$500.00</span>
<span class="t" style="top:292.5px;font-size:12px;line-height:17px;color:#2196f3;left:1557.0px;letter-spacing:-0.225px;">Not</span>
<span class="t" style="top:307.5px;font-size:12px;line-height:17px;color:#2196f3;left:1557.0px;letter-spacing:-0.441px;">Received</span>
<div class="b" style="left:428px;top:954px;width:23px;height:8px;background:#e2e2e2;border-radius:4px;"></div>
<div class="b" style="left:426.5px;top:952px;width:12px;height:12px;background:#c2c2c2;border-radius:6px;"></div>
<div class="b" style="left:419px;top:982px;width:1241px;height:1px;background:#e8e8e8;"></div>
<div class="b" style="left:427px;top:999px;width:90px;height:25px;background:#0a5a96;border-radius:2px;"></div>
<span class="t" style="top:1002.0px;font-size:13px;line-height:18px;color:#fff;left:442.0px;letter-spacing:0.054px;">VOID</span>
<div class="b" style="left:1660px;top:120px;width:1px;height:920px;background:#dcdcdc;"></div>
<div class="b" style="left:1661px;top:158px;width:259px;height:882px;background:#fff;"></div>
<svg class="i" style="left:1718.5px;top:128.5px;" width="21" height="21" viewBox="0 0 24 24"><path fill="#0a5a96" transform="rotate(90 12 12)" d="M12 4V1L8 5l4 4V6c3.31 0 6 2.69 6 6 0 1.01-.25 1.97-.7 2.8l1.46 1.46C19.54 15.03 20 13.57 20 12c0-4.42-3.58-8-8-8zm0 14c-3.31 0-6-2.69-6-6 0-1.01.25-1.97.7-2.8L5.24 7.74C4.46 8.97 4 10.43 4 12c0 4.42 3.58 8 8 8v3l4-4-4-4v3z"/></svg>
<svg class="i" style="left:1752px;top:128px;" width="22" height="22" viewBox="0 0 24 24"><path fill="#0a5a96" transform="rotate(45 12 12)" d="M16.5 6v11.5c0 2.21-1.79 4-4 4s-4-1.79-4-4V5c0-1.38 1.12-2.5 2.5-2.5s2.5 1.12 2.5 2.5v10.5c0 .55-.45 1-1 1s-1-.45-1-1V6H10v9.5c0 1.38 1.12 2.5 2.5 2.5s2.5-1.12 2.5-2.5V5c0-2.21-1.79-4-4-4S7 2.79 7 5v12.5c0 3.04 2.46 5.5 5.5 5.5s5.5-2.46 5.5-5.5V6h-1.5z"/></svg>
<span class="t" style="top:130.0px;font-size:11px;line-height:15px;color:#f00;left:1777.0px;">0</span>
<svg class="i" style="left:1794px;top:127.5px;" width="23" height="23" viewBox="0 0 24 24"><path fill="#0a5a96" d="M19 8H5c-1.66 0-3 1.34-3 3v6h4v4h12v-4h4v-6c0-1.66-1.34-3-3-3zm-3 11H8v-5h8v5zm3-7c-.55 0-1-.45-1-1s.45-1 1-1 1 .45 1 1-.45 1-1 1zm-1-9H6v4h12V3z"/></svg>
<svg class="i" style="left:1817.5px;top:136.5px" width="7" height="4" viewBox="0 0 7 4"><path d="M0 0h7L3.5 4z" fill="#0a5a96"/></svg>
<svg class="i" style="left:1837.5px;top:127.5px;" width="23" height="23" viewBox="0 0 24 24"><path fill="#0a5a96" d="M20 4H4c-1.1 0-1.99.9-1.99 2L2 18c0 1.1.9 2 2 2h16c1.1 0 2-.9 2-2V6c0-1.1-.9-2-2-2zm0 4l-8 5-8-5V6l8 5 8-5v2z"/></svg>
<svg class="i" style="left:1861.5px;top:136.5px" width="7" height="4" viewBox="0 0 7 4"><path d="M0 0h7L3.5 4z" fill="#0a5a96"/></svg>
<svg class="i" style="left:1881.5px;top:127.5px;" width="23" height="23" viewBox="0 0 24 24"><path fill="#0a5a96" d="M14 2H6c-1.1 0-1.99.9-1.99 2L4 20c0 1.1.89 2 1.99 2H18c1.1 0 2-.9 2-2V8l-6-6zm2 16H8v-2h8v2zm0-4H8v-2h8v2zm-3-5V3.5L18.5 9H13z"/></svg>
<svg class="i" style="left:1905.5px;top:136.5px" width="7" height="4" viewBox="0 0 7 4"><path d="M0 0h7L3.5 4z" fill="#0a5a96"/></svg>
<span class="t" style="top:168.0px;font-size:13px;line-height:18px;color:#333;left:1663.7px;letter-spacing:-1.106px;">TRANSACTION</span>
<span class="t" style="top:168.0px;font-size:13px;line-height:18px;color:#333;left:1767.0px;letter-spacing:-1.270px;">VENDOR</span>
<span class="t" style="top:168.0px;font-size:13px;line-height:18px;color:#333;left:1862.0px;letter-spacing:-1.656px;">LOGS</span>
<div class="b" style="left:1661px;top:195px;width:259px;height:1px;background:#e2e2e2;"></div>
<div class="b" style="left:1661px;top:194px;width:86px;height:2px;background:#0a5a96;"></div>
<span class="t" style="top:213.0px;font-size:13px;line-height:18px;color:#222;left:1677.4px;letter-spacing:-0.388px;text-shadow:0 0 0.4px #222;">SUMMARY</span>
<span class="t" style="top:241.5px;font-size:12px;line-height:17px;color:#222;left:1677.4px;letter-spacing:-0.228px;">Created on 06/17/2021 02:34 PM by test</span>
<span class="t" style="top:262.0px;font-size:12px;line-height:17px;color:#222;left:1677.4px;letter-spacing:-0.206px;">Last edited on 06/17/2021 02:36 PM by test</span>
<div class="b" style="left:1661px;top:293px;width:259px;height:2px;background:#eeeeee;"></div>
<svg class="i" style="left:1677px;top:304.5px;" width="20.5" height="20.5" viewBox="0 0 24 24"><path fill="#2c63ea" d="M12 2C6.48 2 2 6.48 2 12s4.48 10 10 10 10-4.48 10-10S17.52 2 12 2zm-2 15l-5-5 1.41-1.41L10 14.17l7.59-7.59L19 8l-9 9z"/></svg>
<div class="b" style="left:1682px;top:309px;width:11px;height:11px;background:#fff;border-radius:6px;z-index:-1;"></div>
<span class="t" style="top:307.0px;font-size:12px;line-height:17px;color:#222;left:1703.0px;letter-spacing:-0.471px;">0 Open Tasks</span>
<svg class="i" style="left:1677px;top:327.5px;" width="20.5" height="20.5" viewBox="0 0 24 24"><path fill="#a5d6a7" d="M12 2C6.48 2 2 6.48 2 12s4.48 10 10 10 10-4.48 10-10S17.52 2 12 2zm-2 15l-5-5 1.41-1.41L10 14.17l7.59-7.59L19 8l-9 9z"/></svg>
<span class="t" style="top:330.0px;font-size:12px;line-height:17px;color:#9e9e9e;left:1703.0px;letter-spacing:-0.225px;">0 Completed Tasks</span>
<div class="b" style="left:1661px;top:357px;width:259px;height:2px;background:#eeeeee;"></div>
<div class="b" style="left:1661px;top:401px;width:259px;height:2px;background:#eeeeee;"></div>
<span class="t" style="top:415.0px;font-size:15px;line-height:21px;color:#222;left:1775.0px;letter-spacing:-2.367px;">ITEMS</span>
<span class="t" style="top:460.5px;font-size:12px;line-height:17px;color:#0a5a96;left:1747.0px;letter-spacing:-0.292px;">TEST-SKU-3-D</span>
<span class="t" style="top:460.5px;font-size:12px;line-height:17px;color:#222;left:1888.6px;letter-spacing:-0.706px;">$0.00</span>
<div class="b" style="left:1661px;top:916px;width:259px;height:2px;background:#eeeeee;"></div>
<span class="t" style="top:952.2px;font-size:13px;line-height:18px;color:#222;left:1859.8px;letter-spacing:-0.427px;font-weight:700;">$500.00</span>
<div class="b" style="left:1677px;top:987px;width:227px;height:1px;background:#e4e4e4;"></div>
<span class="t" style="top:995.1px;font-size:13px;line-height:18px;color:#222;left:1873.0px;letter-spacing:-0.366px;font-weight:700;">$0.00</span>
<span class="t" style="top:1009.8px;font-size:13px;line-height:18px;color:#f00;left:1859.8px;letter-spacing:-0.427px;font-weight:700;">$500.00</span>
<div class="b" style="left:454px;top:381px;width:1350px;height:670px;background:#fff;border:1px solid #505050;box-shadow:1px 2px 12px 1px rgba(0,0,0,0.38);"></div>
<div class="b" style="left:455px;top:382px;width:1348px;height:79px;background:linear-gradient(90deg,#c6d7e4 0px,#d2dfe9 90px,#e4ecf3 170px,#f6f9fb 250px,#ffffff 310px);border-bottom:1px solid #b4b8bc;"></div>
<div class="b" style="left:475px;top:399px;width:16px;height:16px;background:#0f9d58;border-radius:2px;"></div>
<div class="b" style="left:477px;top:403.5px;width:12px;height:3px;background:#fff;"></div>
<div class="b" style="left:479.5px;top:401px;width:3px;height:12.5px;background:#fff;"></div>
<span class="t" style="top:399.0px;font-size:12px;line-height:17px;color:#1f1f1f;left:499.0px;letter-spacing:-0.266px;-webkit-mask-image:linear-gradient(90deg,#000 88%,transparent 100%);mask-image:linear-gradient(90deg,#000 88%,transparent 100%);">PO-0013873_2021-06-18_from_A</span>
<svg class="i" style="left:682.5px;top:402.5px" width="9" height="9" viewBox="0 0 9 9"><path d="M1 1l7 7M8 1l-7 7" stroke="#111" stroke-width="1.700" fill="none"/></svg>
<svg class="i" style="left:719px;top:401px" width="12" height="12" viewBox="0 0 12 12"><path d="M6 0.500v11M0.500 6h11" stroke="#111" stroke-width="1.600" fill="none"/></svg>
<div class="b" style="left:1637px;top:400px;width:14px;height:14px;background:#333;border-radius:7px;"></div>
<svg class="i" style="left:1640.0px;top:405.25px" width="8" height="4.5" viewBox="0 0 8 4.5"><path d="M0 0h8L4.0 4.5z" fill="#fff"/></svg>
<svg class="i" style="left:469px;top:434px" width="16" height="16" viewBox="0 0 16 16"><path d="M15 8H2.500M8 1.500L1.500 8L8 14.500" fill="none" stroke="#111" stroke-width="2.100"/></svg>
<svg class="i" style="left:501px;top:434px" width="16" height="16" viewBox="0 0 16 16"><path d="M1 8h12.500M8 1.500L14.500 8L8 14.500" fill="none" stroke="#8a8a8a" stroke-width="2.100"/></svg>
<svg class="i" style="left:530.5px;top:431.5px;stroke:#111;stroke-width:0.6px;" width="20" height="20" viewBox="0 0 24 24"><path fill="#111" d="M17.65 6.35C16.2 4.9 14.21 4 12 4c-4.42 0-7.99 3.58-7.99 8s3.57 8 7.99 8c3.73 0 6.84-2.55 7.73-6h-2.08c-.82 2.33-3.04 4-5.65 4-3.31 0-6-2.69-6-6s2.69-6 6-6c1.66 0 3.14.69 4.22 1.78L13 11h7V4l-2.35 2.35z"/></svg>
<div class="b" style="left:563px;top:428px;width:1030px;height:28px;background:#e3e4e6;border-radius:14px;"></div>
<svg class="i" style="left:574.0px;top:435.0px;" width="13" height="13" viewBox="0 0 24 24"><path fill="#444" d="M18 8h-1V6c0-2.76-2.24-5-5-5S7 3.24 7 6v2H6c-1.1 0-2 .9-2 2v10c0 1.1.9 2 2 2h12c1.1 0 2-.9 2-2V10c0-1.1-.9-2-2-2zm-6 9c-1.1 0-2-.9-2-2s.9-2 2-2 2 .9 2 2-.9 2-2 2zm3.1-9H8.9V6c0-1.71 1.39-3.1 3.1-3.1 1.71 0 3.1 1.39 3.1 3.1v2z"/></svg>
<span class="t" style="top:433.0px;font-size:14px;line-height:20px;color:#202124;left:597.5px;letter-spacing:-0.056px;">docs.google.com</span>
<span class="t" style="top:433.0px;font-size:14px;line-height:20px;color:#6a6a6a;left:702.5px;letter-spacing:-0.246px;">/spreadsheets/d/1WyeIvUEOZcwYPd2qSHCFFD0fQN17IYRVX6CLXu2wqNg/edit#gid=557835714</span>
<svg class="i" style="left:1566.0px;top:432.5px;" width="18" height="18" viewBox="0 0 24 24"><path fill="#333" d="M22 9.24l-7.19-.62L12 2 9.19 8.63 2 9.24l5.46 4.73L5.82 21 12 17.27 18.18 21l-1.63-7.03L22 9.24zM12 15.4l-3.76 2.27 1-4.28-3.32-2.88 4.38-.38L12 6.1l1.71 4.04 4.38.38-3.32 2.88 1 4.28L12 15.4z"/></svg>
<div class="b" style="left:1609px;top:435px;width:11px;height:14px;background:#2e9d7c;border-radius:1px;border:1px solid #8f8f8f;"></div>
<div class="b" style="left:1612px;top:437px;width:3px;height:10px;background:#8fd0bb;"></div>
<svg class="i" style="left:1637.5px;top:432.5px;" width="18" height="18" viewBox="0 0 24 24"><path fill="#111" d="M20.5 11H19V7c0-1.1-.9-2-2-2h-4V3.5C13 2.12 11.88 1 10.5 1S8 2.12 8 3.5V5H4c-1.1 0-1.99.9-1.99 2v3.8H3.5c1.49 0 2.7 1.21 2.7 2.7s-1.21 2.7-2.7 2.7H2V20c0 1.1.9 2 2 2h3.8v-1.5c0-1.49 1.21-2.7 2.7-2.7 1.49 0 2.7 1.21 2.7 2.7V22H17c1.1 0 2-.9 2-2v-4h1.5c1.38 0 2.5-1.12 2.5-2.5S21.88 11 20.5 11z"/></svg>
<div class="b" style="left:1668px;top:431px;width:22px;height:22px;background:#7b1fa2;border-radius:11px;"></div>
<span class="t" style="top:434.0px;font-size:12px;line-height:17px;color:#fff;left:1674.3px;">K</span>
<div class="b" style="left:1697px;top:428px;width:98px;height:28px;background:#fce8e6;border:1px solid #d93025;border-radius:14px;"></div>
<span class="t" style="top:433.5px;font-size:13px;line-height:18px;color:#c5221f;left:1710.0px;letter-spacing:-0.608px;">Обновить</span>
<svg class="i" style="left:1773.5px;top:434.0px;" width="16" height="16" viewBox="0 0 24 24"><path fill="#d93025" d="M12 8c1.100 0 2-.900 2-2s-.900-2-2-2-2 .900-2 2 .900 2 2 2zm0 2c-1.100 0-2 .900-2 2s.900 2 2 2 2-.900 2-2-.900-2-2-2zm0 6c-1.100 0-2 .900-2 2s.900 2 2 2 2-.900 2-2-.900-2-2-2z"/></svg>
<svg class="i" style="left:478px;top:475px" width="26" height="36" viewBox="0 0 26 36"><path d="M2.500 0h14.500L26 9v24.500A2.500 2.500 0 0 1 23.500 36h-21A2.500 2.500 0 0 1 0 33.500v-31A2.500 2.500 0 0 1 2.500 0z" fill="#34a853"/><path d="M17 0l9 9h-6.500A2.500 2.500 0 0 1 17 6.500z" fill="#188038"/><rect x="5" y="14" width="16.200" height="12" fill="#fff"/><rect x="7" y="16" width="5" height="3" fill="#34a853"/><rect x="14" y="16" width="5.200" height="3" fill="#34a853"/><rect x="7" y="21" width="5" height="3" fill="#34a853"/><rect x="14" y="21" width="5.200" height="3" fill="#34a853"/></svg>
<span class="t" style="top:471.0px;font-size:18px;line-height:25px;color:#202124;left:527.5px;letter-spacing:-0.243px;">PO-0013873_2021-06-18_from_ALWAZONSALE</span>
<svg class="i" style="left:929.5px;top:472.7px;" width="18" height="18" viewBox="0 0 24 24"><path fill="#444" d="M22 9.24l-7.19-.62L12 2 9.19 8.63 2 9.24l5.46 4.73L5.82 21 12 17.27 18.18 21l-1.63-7.03L22 9.24zM12 15.4l-3.76 2.27 1-4.28-3.32-2.88 4.38-.38L12 6.1l1.71 4.04 4.38.38-3.32 2.88 1 4.28L12 15.4z"/></svg>
<svg class="i" style="left:960.0px;top:473.2px;" width="17" height="17" viewBox="0 0 24 24"><path fill="#444" d="M20 6h-8l-2-2H4c-1.100 0-2 .900-2 2v12c0 1.100.900 2 2 2h16c1.100 0 2-.900 2-2V8c0-1.100-.900-2-2-2zm0 12H4V6h5.170l2 2H20v10zm-7.840-1.410L13.580 18l4-4-4-4-1.410 1.410L13.750 13H8v2h5.750z"/></svg>
<svg class="i" style="left:989.5px;top:472.7px;" width="18" height="18" viewBox="0 0 24 24"><path fill="#444" d="M19.350 10.040C18.670 6.590 15.640 4 12 4 9.110 4 6.600 5.640 5.350 8.040 2.340 8.360 0 10.910 0 14c0 3.310 2.690 6 6 6h13c2.760 0 5-2.240 5-5 0-2.640-2.050-4.780-4.650-4.960zM19 18H6c-2.210 0-4-1.790-4-4 0-2.050 1.530-3.760 3.560-3.970l1.070-.110.500-.950C8.080 7.140 9.940 6 12 6c2.620 0 4.880 1.860 5.390 4.430l.300 1.500 1.530.110c1.560.100 2.780 1.410 2.780 2.960 0 1.650-1.350 3-3 3zm-9-3.820l-2.090-2.090L6.500 13.500 10 17l6.010-6.010-1.410-1.410z"/></svg>
<span class="t" style="top:498.7px;font-size:14px;line-height:20px;color:#202124;left:526.0px;letter-spacing:0.145px;">Файл</span>
<span class="t" style="top:498.7px;font-size:14px;line-height:20px;color:#202124;left:575.7px;letter-spacing:0.285px;">Правка</span>
<span class="t" style="top:498.7px;font-size:14px;line-height:20px;color:#202124;left:639.5px;letter-spacing:-0.109px;">Вид</span>
<span class="t" style="top:498.7px;font-size:14px;line-height:20px;color:#202124;left:679.5px;letter-spacing:0.324px;">Вставка</span>
<span class="t" style="top:498.7px;font-size:14px;line-height:20px;color:#202124;left:748.0px;letter-spacing:0.378px;">Формат</span>
<span class="t" style="top:498.7px;font-size:14px;line-height:20px;color:#202124;left:814.5px;letter-spacing:0.403px;">Данные</span>
<span class="t" style="top:498.7px;font-size:14px;line-height:20px;color:#202124;left:882.5px;letter-spacing:0.382px;">Инструменты</span>
<span class="t" style="top:498.7px;font-size:14px;line-height:20px;color:#202124;left:989.0px;letter-spacing:0.340px;">Дополнения</span>
<span class="t" style="top:498.7px;font-size:14px;line-height:20px;color:#202124;left:1086.7px;letter-spacing:0.197px;">Справка</span>
<span class="t" style="top:499.0px;font-size:14px;line-height:20px;color:#777;left:1165.0px;letter-spacing:-0.096px;text-decoration:underline;">Последнее изменение: 3 ...</span>
<svg class="i" style="left:1382.3px;top:481.0px;" width="24" height="24" viewBox="0 0 24 24"><path fill="#555" d="M16 6l2.290 2.290-4.880 4.880-4-4L2 16.590 3.410 18l6-6 4 4 6.300-6.290L22 12V6z"/></svg>
<svg class="i" style="left:1434px;top:482px" width="22" height="22" viewBox="0 0 22 22"><rect x="2" y="2" width="18" height="14" rx="1.200" fill="none" stroke="#5a5d61" stroke-width="2"/><path d="M16 16h5v4.600z" fill="#5a5d61"/><path d="M5 6h12M5 9h12M5 12h12" stroke="#5a5d61" stroke-width="1.600" fill="none"/></svg>
<div class="b" style="left:1477px;top:475px;width:54px;height:36px;background:#fff;border:1px solid #dadce0;border-radius:18px;"></div>
<div class="b" style="left:1489px;top:484px;width:22px;height:18px;background:#fff;border:2px solid #1a73e8;border-radius:2px;"></div>
<svg class="i" style="left:1495px;top:488px" width="10" height="10" viewBox="0 0 10 10"><path d="M5 9.500V1.500M1.500 5L5 1.500L8.500 5" fill="none" stroke="#1a73e8" stroke-width="1.800"/></svg>
<svg class="i" style="left:1516.0px;top:491.0px" width="8" height="4" viewBox="0 0 8 4"><path d="M0 0h8L4.0 4z" fill="#1a73e8"/></svg>
<div class="b" style="left:1543px;top:475px;width:188px;height:36px;background:#1c8439;border-radius:4px;"></div>
<svg class="i" style="left:1555.3px;top:485.0px;" width="14" height="14" viewBox="0 0 24 24"><path fill="#fff" d="M18 8h-1V6c0-2.76-2.24-5-5-5S7 3.24 7 6v2H6c-1.1 0-2 .9-2 2v10c0 1.1.9 2 2 2h12c1.1 0 2-.9 2-2V10c0-1.1-.9-2-2-2zm-6 9c-1.1 0-2-.9-2-2s.9-2 2-2 2 .9 2 2-.9 2-2 2zm3.1-9H8.9V6c0-1.71 1.39-3.1 3.1-3.1 1.71 0 3.1 1.39 3.1 3.1v2z"/></svg>
<span class="t" style="top:483.0px;font-size:14px;line-height:20px;color:#fff;left:1576.7px;letter-spacing:0.101px;font-weight:700;">Настройки Доступа</span>
<div class="b" style="left:1751px;top:477px;width:32px;height:32px;background:#7b1fa2;border-radius:16px;"></div>
<span class="t" style="top:480.0px;font-size:19px;line-height:27px;color:#fff;left:1760.3px;">K</span>
<div class="b" style="left:455px;top:525px;width:1293px;height:1px;background:#e0e0e0;"></div>
<svg class="i" style="left:489.7px;top:536.0px;" width="18" height="18" viewBox="0 0 24 24"><path fill="#5f6368" d="M12.5 8c-2.65 0-5.05.99-6.9 2.6L2 7v9h9l-3.62-3.62c1.39-1.16 3.16-1.88 5.12-1.88 3.54 0 6.55 2.31 7.6 5.5l2.37-.78C21.08 11.03 17.15 8 12.5 8z"/></svg>
<svg class="i" style="left:518.0px;top:536.0px;" width="18" height="18" viewBox="0 0 24 24"><path fill="#5f6368" d="M18.4 10.6C16.55 8.99 14.15 8 11.5 8c-4.65 0-8.58 3.03-9.96 7.22L3.9 16c1.05-3.19 4.05-5.5 7.6-5.5 1.95 0 3.73.72 5.12 1.88L13 16h9V7l-3.6 3.6z"/></svg>
<svg class="i" style="left:546.0px;top:536.0px;" width="18" height="18" viewBox="0 0 24 24"><path fill="#5f6368" d="M19 8H5c-1.66 0-3 1.34-3 3v6h4v4h12v-4h4v-6c0-1.66-1.34-3-3-3zm-3 11H8v-5h8v5zm3-7c-.55 0-1-.45-1-1s.45-1 1-1 1 .45 1 1-.45 1-1 1zm-1-9H6v4h12V3z"/></svg>
<svg class="i" style="left:574.5px;top:536.5px;" width="17" height="17" viewBox="0 0 24 24"><path fill="#5f6368" d="M18 4V3c0-.55-.45-1-1-1H5c-.55 0-1 .45-1 1v4c0 .55.45 1 1 1h12c.55 0 1-.45 1-1V6h1v4H9v11c0 .55.45 1 1 1h2c.55 0 1-.45 1-1v-9h8V4h-3z"/></svg>
<div class="b" style="left:601px;top:535.5px;width:1px;height:19px;background:#dadce0;"></div>
<div class="b" style="left:675px;top:535.5px;width:1px;height:19px;background:#dadce0;"></div>
<div class="b" style="left:834px;top:535.5px;width:1px;height:19px;background:#dadce0;"></div>
<div class="b" style="left:949px;top:535.5px;width:1px;height:19px;background:#dadce0;"></div>
<div class="b" style="left:1021.5px;top:535.5px;width:1px;height:19px;background:#dadce0;"></div>
<div class="b" style="left:1144.5px;top:535.5px;width:1px;height:19px;background:#dadce0;"></div>
<div class="b" style="left:1260px;top:535.5px;width:1px;height:19px;background:#dadce0;"></div>
<div class="b" style="left:1425.5px;top:535.5px;width:1px;height:19px;background:#dadce0;"></div>
<div class="b" style="left:1603px;top:535.5px;width:1px;height:19px;background:#dadce0;"></div>
<span class="t" style="top:536.0px;font-size:12px;line-height:17px;color:#555;left:617.5px;letter-spacing:-0.548px;">100%</span>
<svg class="i" style="left:659.0px;top:544.0px" width="8" height="4" viewBox="0 0 8 4"><path d="M0 0h8L4.0 4z" fill="#5f6368"/></svg>
<span class="t" style="top:536.0px;font-size:13px;line-height:18px;color:#555;left:688.7px;letter-spacing:-0.171px;">р.</span>
<span class="t" style="top:536.5px;font-size:12px;line-height:17px;color:#555;left:717.5px;">%</span>
<span class="t" style="top:535.0px;font-size:12.5px;line-height:18px;color:#555;left:741.0px;letter-spacing:0.788px;">.0</span>
<span class="t" style="top:535.0px;font-size:12.5px;line-height:18px;color:#555;left:768.7px;letter-spacing:0.208px;">.00</span>
<svg class="i" style="left:748px;top:549px" width="9" height="6" viewBox="0 0 9 6"><path d="M9 3H2M4 0.500L1.500 3L4 5.500" fill="none" stroke="#444" stroke-width="1.200"/></svg>
<svg class="i" style="left:777px;top:549px" width="9" height="6" viewBox="0 0 9 6"><path d="M0 3h7M5 0.500L7.500 3L5 5.500" fill="none" stroke="#444" stroke-width="1.200"/></svg>
<span class="t" style="top:536.0px;font-size:12.5px;line-height:18px;color:#555;left:795.7px;letter-spacing:-0.452px;">123</span>
<svg class="i" style="left:817.0px;top:544.0px" width="8" height="4" viewBox="0 0 8 4"><path d="M0 0h8L4.0 4z" fill="#5f6368"/></svg>
<span class="t" style="top:536.0px;font-size:12.5px;line-height:18px;color:#555;left:851.7px;letter-spacing:-0.349px;">По умолча...</span>
<svg class="i" style="left:931.0px;top:544.0px" width="8" height="4" viewBox="0 0 8 4"><path d="M0 0h8L4.0 4z" fill="#5f6368"/></svg>
<span class="t" style="top:535.5px;font-size:12.5px;line-height:18px;color:#555;left:965.0px;letter-spacing:-0.488px;">11</span>
<svg class="i" style="left:1006.0px;top:544.0px" width="8" height="4" viewBox="0 0 8 4"><path d="M0 0h8L4.0 4z" fill="#5f6368"/></svg>
<div class="b" style="left:1028px;top:532px;width:26px;height:26px;background:#e6f4ea;border-radius:3px;"></div>
<svg class="i" style="left:1031.0px;top:535.5px;" width="19" height="19" viewBox="0 0 24 24"><path fill="#188038" d="M15.6 10.79c.97-.67 1.65-1.77 1.65-2.79 0-2.26-1.75-4-4-4H7v14h7.04c2.09 0 3.71-1.7 3.71-3.79 0-1.52-.86-2.82-2.15-3.42zM10 6.5h3c.83 0 1.5.67 1.5 1.5s-.67 1.5-1.5 1.5h-3v-3zm3.5 9H10v-3h3.5c.83 0 1.5.67 1.5 1.5s-.67 1.5-1.5 1.5z"/></svg>
<svg class="i" style="left:1058.5px;top:535.0px;" width="20" height="20" viewBox="0 0 24 24"><path fill="#5f6368" d="M10 4v3h2.21l-3.42 8H6v3h8v-3h-2.21l3.42-8H18V4z"/></svg>
<svg class="i" style="left:1087.7px;top:536.0px;" width="18" height="18" viewBox="0 0 24 24"><path fill="#5f6368" d="M7.24 8.75c-.26-.48-.39-1.03-.39-1.67 0-.61.13-1.16.4-1.67.26-.5.63-.93 1.11-1.29.48-.35 1.05-.63 1.7-.83.66-.19 1.39-.29 2.18-.29.81 0 1.54.11 2.21.34.66.22 1.23.54 1.69.94.47.4.83.88 1.08 1.43.25.55.38 1.15.38 1.81h-3.01c0-.31-.05-.59-.15-.85-.09-.27-.24-.49-.44-.68-.2-.19-.45-.33-.75-.44-.3-.1-.66-.16-1.06-.16-.39 0-.74.04-1.03.13-.29.09-.53.21-.72.36-.19.16-.34.34-.44.55-.1.21-.15.43-.15.66 0 .48.25.88.74 1.21.38.25.77.48 1.41.7H7.39c-.05-.08-.11-.17-.15-.25zM21 12v-2H3v2h9.620c.18.07.4.14.55.2.37.17.66.34.87.51.21.17.35.36.43.57.07.2.11.43.11.69 0 .23-.05.45-.14.66-.09.2-.23.38-.42.53-.19.15-.42.26-.71.35-.29.08-.63.13-1.01.13-.43 0-.83-.04-1.18-.13s-.66-.23-.91-.42c-.25-.19-.45-.44-.59-.75-.14-.31-.25-.76-.25-1.21H6.4c0 .55.08 1.13.24 1.58.16.45.37.85.65 1.21.28.35.6.66.98.92.37.26.78.48 1.22.65.44.17.9.3 1.38.39.48.08.96.13 1.44.13.8 0 1.53-.09 2.18-.28s1.21-.45 1.67-.79c.46-.34.82-.77 1.07-1.27s.38-1.07.38-1.71c0-.6-.1-1.14-.31-1.61-.05-.11-.11-.23-.17-.33H21z"/></svg>
<span class="t" style="top:530.5px;font-size:17px;line-height:24px;color:#5f6368;left:1120.0px;">A</span>
<div class="b" style="left:1115.7px;top:552.5px;width:21px;height:4px;background:#000;"></div>
<svg class="i" style="left:1155.5px;top:535.5px;" width="17" height="17" viewBox="0 0 24 24"><path fill="#5f6368" d="M16.560 8.940L7.620 0 6.210 1.410l2.380 2.380-5.150 5.150c-.590.590-.590 1.540 0 2.120l5.500 5.500c.290.290.680.440 1.060.440s.770-.150 1.060-.440l5.500-5.500c.590-.580.590-1.530 0-2.120zM5.210 10L10 5.210 14.790 10H5.210zM19 11.500s-2 2.170-2 3.500c0 1.100.900 2 2 2s2-.900 2-2c0-1.330-2-3.500-2-3.500z"/></svg>
<svg class="i" style="left:1185.5px;top:535.5px;" width="19" height="19" viewBox="0 0 24 24"><path fill="#5f6368" d="M3 3v18h18V3H3zm8 16H5v-6h6v6zm0-8H5V5h6v6zm8 8h-6v-6h6v6zm0-8h-6V5h6v6z"/></svg>
<svg class="i" style="left:1216px;top:537px" width="18" height="16" viewBox="0 0 18 16"><path d="M1 1h16M1 15h16M1 1v4M17 1v4M1 11v4M17 11v4M9 1v3M9 12v3M2 8h5M16 8h-5M5 6L7 8L5 10M13 6L11 8L13 10" fill="none" stroke="#c4c7ca" stroke-width="1.600"/></svg>
<svg class="i" style="left:1243.0px;top:544.0px" width="8" height="4" viewBox="0 0 8 4"><path d="M0 0h8L4.0 4z" fill="#c4c7ca"/></svg>
<svg class="i" style="left:1270.500px;top:538px" width="14" height="14" viewBox="0 0 14 14"><path d="M0 1h14M0 5h10M0 9h14M0 13h10" stroke="#5f6368" stroke-width="1.700" fill="none"/></svg>
<svg class="i" style="left:1291.0px;top:544.0px" width="8" height="4" viewBox="0 0 8 4"><path d="M0 0h8L4.0 4z" fill="#5f6368"/></svg>
<svg class="i" style="left:1307.7px;top:536.0px;" width="18" height="18" viewBox="0 0 24 24"><path fill="#5f6368" d="M16 13h-3V3h-2v10H8l4 4 4-4zM4 19v2h16v-2H4z"/></svg>
<svg class="i" style="left:1330.0px;top:544.0px" width="8" height="4" viewBox="0 0 8 4"><path d="M0 0h8L4.0 4z" fill="#5f6368"/></svg>
<svg class="i" style="left:1346px;top:536px" width="18" height="18" viewBox="0 0 18 18"><path d="M2 1v16M9.500 1v5M9.500 12v5M5 9h10M12.500 6L15.500 9L12.500 12" fill="none" stroke="#5f6368" stroke-width="1.700"/></svg>
<svg class="i" style="left:1368.7px;top:544.0px" width="8" height="4" viewBox="0 0 8 4"><path d="M0 0h8L4.0 4z" fill="#5f6368"/></svg>
<svg class="i" style="left:1385px;top:536px" width="18" height="18" viewBox="0 0 18 18"><path d="M1.500 3.500L9 6L5 10.500z M4.500 16L15 5.500M10.500 5h5v5" fill="none" stroke="#5f6368" stroke-width="1.600"/></svg>
<svg class="i" style="left:1407.7px;top:544.0px" width="8" height="4" viewBox="0 0 8 4"><path d="M0 0h8L4.0 4z" fill="#5f6368"/></svg>
<svg class="i" style="left:1432.5px;top:534.5px;" width="21" height="21" viewBox="0 0 24 24"><path fill="#5f6368" d="M3.9 12c0-1.71 1.39-3.1 3.1-3.1h4V7H7c-2.76 0-5 2.24-5 5s2.24 5 5 5h4v-1.900H7c-1.71 0-3.1-1.39-3.1-3.1zM8 13h8v-2H8v2zm9-6h-4v1.900h4c1.71 0 3.1 1.39 3.1 3.1s-1.39 3.1-3.1 3.1h-4V17h4c2.76 0 5-2.24 5-5s-2.24-5-5-5z"/></svg>
<svg class="i" style="left:1463.2px;top:536.5px;" width="17" height="17" viewBox="0 0 24 24"><path fill="#5f6368" transform="translate(24 0) scale(-1 1)" d="M22 4c0-1.100-.900-2-2-2H4c-1.100 0-2 .900-2 2v12c0 1.100.900 2 2 2h14l4 4V4zm-2 13.170L18.830 16H4V4h16v13.170zM13 5h-2v4H7v2h4v4h2v-4h4V9h-4z"/></svg>
<svg class="i" style="left:1489.5px;top:534.5px;" width="21" height="21" viewBox="0 0 24 24"><path fill="#5f6368" d="M9 17H7v-7h2v7zm4 0h-2V7h2v10zm4 0h-2v-4h2v4zm2.500 2.100h-15V5h15v14.100zm0-16.100h-15c-1.1 0-2 .9-2 2v14c0 1.1.9 2 2 2h15c1.1 0 2-.9 2-2V5c0-1.1-.9-2-2-2z"/></svg>
<svg class="i" style="left:1519.5px;top:535.5px;" width="19" height="19" viewBox="0 0 24 24"><path fill="#5f6368" d="M7 6h10l-5.010 6.300L7 6zm-2.750-.39C6.270 8.200 10 13 10 13v6c0 .550.450 1 1 1h2c.550 0 1-.450 1-1v-6s3.720-4.800 5.740-7.390c.510-.660.040-1.610-.790-1.610H5.040c-.830 0-1.300.950-.790 1.610z"/></svg>
<svg class="i" style="left:1546.7px;top:544.0px" width="8" height="4" viewBox="0 0 8 4"><path d="M0 0h8L4.0 4z" fill="#5f6368"/></svg>
<svg class="i" style="left:1563.7px;top:536.0px;" width="18" height="18" viewBox="0 0 24 24"><path fill="#5f6368" d="M18 4H6v2l6.500 6L6 18v2h12v-3h-7l5-5-5-5h7z"/></svg>
<svg class="i" style="left:1586.5px;top:544.25px" width="7" height="3.5" viewBox="0 0 7 3.5"><path d="M0 0h7L3.5 3.5z" fill="#5f6368"/></svg>
<span class="t" style="top:535.0px;font-size:15px;line-height:21px;color:#111;left:1615.0px;letter-spacing:-0.174px;font-weight:700;">Ру</span>
<svg class="i" style="left:1640.5px;top:544.25px" width="7" height="3.5" viewBox="0 0 7 3.5"><path d="M0 0h7L3.5 3.5z" fill="#5f6368"/></svg>
<svg class="i" style="left:1718.0px;top:534.0px;" width="22" height="22" viewBox="0 0 24 24"><path fill="#444" d="M7.410 15.410L12 10.830l4.590 4.580L18 14l-6-6-6 6z"/></svg>
<div class="b" style="left:455px;top:564px;width:1293px;height:1px;background:#e0e0e0;"></div>
<span class="t" style="top:567.5px;font-size:13px;line-height:18px;color:#222;left:463.7px;letter-spacing:-0.951px;">A1</span>
<svg class="i" style="left:544.5px;top:576.0px" width="6" height="3" viewBox="0 0 6 3"><path d="M0 0h6L3.0 3z" fill="#5f6368"/></svg>
<div class="b" style="left:557px;top:567px;width:1px;height:20px;background:#dadce0;"></div>
<div class="b" style="left:601px;top:567px;width:1px;height:20px;background:#dadce0;"></div>
<span class="t" style="top:564.5px;font-size:17px;line-height:24px;color:#b0b0b0;left:569.0px;letter-spacing:2.388px;font-family:'Liberation Serif',serif;font-style:italic;">fx</span>
<span class="t" style="top:567.5px;font-size:13px;line-height:18px;color:#222;left:612.0px;letter-spacing:-0.406px;">PO #</span>
<div class="b" style="left:455px;top:588px;width:1293px;height:1px;background:#d6d6d6;"></div>
<div class="b" style="left:455px;top:589px;width:1280px;height:23px;background:#f8f9fa;"></div>
<div class="b" style="left:455px;top:612px;width:45px;height:440px;background:#f8f9fa;"></div>
<div class="b" style="left:501px;top:589px;width:99px;height:23px;background:#e8eaed;"></div>
<div class="b" style="left:455px;top:612px;width:45px;height:20px;background:#e8eaed;"></div>
<div class="b" style="left:496px;top:589px;width:5px;height:23px;background:#bdbdbd;"></div>
<div class="b" style="left:455px;top:611px;width:1280px;height:1px;background:#c6c6c6;"></div>
<div class="b" style="left:600px;top:589px;width:1px;height:23px;background:#c6c6c6;"></div>
<div class="b" style="left:600px;top:612px;width:1px;height:440px;background:#e1e1e1;"></div>
<div class="b" style="left:700px;top:589px;width:1px;height:23px;background:#c6c6c6;"></div>
<div class="b" style="left:700px;top:612px;width:1px;height:440px;background:#e1e1e1;"></div>
<div class="b" style="left:815px;top:589px;width:1px;height:23px;background:#c6c6c6;"></div>
<div class="b" style="left:815px;top:612px;width:1px;height:440px;background:#e1e1e1;"></div>
<div class="b" style="left:915px;top:589px;width:1px;height:23px;background:#c6c6c6;"></div>
<div class="b" style="left:915px;top:612px;width:1px;height:440px;background:#e1e1e1;"></div>
<div class="b" style="left:1035px;top:589px;width:1px;height:23px;background:#c6c6c6;"></div>
<div class="b" style="left:1035px;top:612px;width:1px;height:440px;background:#e1e1e1;"></div>
<div class="b" style="left:1195px;top:589px;width:1px;height:23px;background:#c6c6c6;"></div>
<div class="b" style="left:1195px;top:612px;width:1px;height:440px;background:#e1e1e1;"></div>
<div class="b" style="left:1305px;top:589px;width:1px;height:23px;background:#c6c6c6;"></div>
<div class="b" style="left:1305px;top:612px;width:1px;height:440px;background:#e1e1e1;"></div>
<div class="b" style="left:1415px;top:589px;width:1px;height:23px;background:#c6c6c6;"></div>
<div class="b" style="left:1415px;top:612px;width:1px;height:440px;background:#e1e1e1;"></div>
<div class="b" style="left:1525px;top:589px;width:1px;height:23px;background:#c6c6c6;"></div>
<div class="b" style="left:1525px;top:612px;width:1px;height:440px;background:#e1e1e1;"></div>
<div class="b" style="left:1605px;top:589px;width:1px;height:23px;background:#c6c6c6;"></div>
<div class="b" style="left:1605px;top:612px;width:1px;height:440px;background:#e1e1e1;"></div>
<div class="b" style="left:1706px;top:589px;width:1px;height:23px;background:#c6c6c6;"></div>
<div class="b" style="left:1706px;top:612px;width:1px;height:440px;background:#e1e1e1;"></div>
<div class="b" style="left:500px;top:612px;width:1px;height:440px;background:#c6c6c6;"></div>
<div class="b" style="left:455px;top:656px;width:46px;height:1px;background:#c6c6c6;"></div>
<div class="b" style="left:501px;top:656px;width:1234px;height:1px;background:#e1e1e1;"></div>
<div class="b" style="left:455px;top:676px;width:46px;height:1px;background:#c6c6c6;"></div>
<div class="b" style="left:501px;top:676px;width:1234px;height:1px;background:#e1e1e1;"></div>
<div class="b" style="left:455px;top:696px;width:46px;height:1px;background:#c6c6c6;"></div>
<div class="b" style="left:501px;top:696px;width:1234px;height:1px;background:#e1e1e1;"></div>
<div class="b" style="left:455px;top:716px;width:46px;height:1px;background:#c6c6c6;"></div>
<div class="b" style="left:501px;top:716px;width:1234px;height:1px;background:#e1e1e1;"></div>
<div class="b" style="left:455px;top:736px;width:46px;height:1px;background:#c6c6c6;"></div>
<div class="b" style="left:501px;top:736px;width:1234px;height:1px;background:#e1e1e1;"></div>
<div class="b" style="left:455px;top:756px;width:46px;height:1px;background:#c6c6c6;"></div>
<div class="b" style="left:501px;top:756px;width:1234px;height:1px;background:#e1e1e1;"></div>
<div class="b" style="left:455px;top:776px;width:46px;height:1px;background:#c6c6c6;"></div>
<div class="b" style="left:501px;top:776px;width:1234px;height:1px;background:#e1e1e1;"></div>
<div class="b" style="left:455px;top:796px;width:46px;height:1px;background:#c6c6c6;"></div>
<div class="b" style="left:501px;top:796px;width:1234px;height:1px;background:#e1e1e1;"></div>
<div class="b" style="left:455px;top:816px;width:46px;height:1px;background:#c6c6c6;"></div>
<div class="b" style="left:501px;top:816px;width:1234px;height:1px;background:#e1e1e1;"></div>
<div class="b" style="left:455px;top:836px;width:46px;height:1px;background:#c6c6c6;"></div>
<div class="b" style="left:501px;top:836px;width:1234px;height:1px;background:#e1e1e1;"></div>
<div class="b" style="left:455px;top:856px;width:46px;height:1px;background:#c6c6c6;"></div>
<div class="b" style="left:501px;top:856px;width:1234px;height:1px;background:#e1e1e1;"></div>
<div class="b" style="left:455px;top:876px;width:46px;height:1px;background:#c6c6c6;"></div>
<div class="b" style="left:501px;top:876px;width:1234px;height:1px;background:#e1e1e1;"></div>
<div class="b" style="left:455px;top:896px;width:46px;height:1px;background:#c6c6c6;"></div>
<div class="b" style="left:501px;top:896px;width:1234px;height:1px;background:#e1e1e1;"></div>
<div class="b" style="left:455px;top:916px;width:46px;height:1px;background:#c6c6c6;"></div>
<div class="b" style="left:501px;top:916px;width:1234px;height:1px;background:#e1e1e1;"></div>
<div class="b" style="left:455px;top:936px;width:46px;height:1px;background:#c6c6c6;"></div>
<div class="b" style="left:501px;top:936px;width:1234px;height:1px;background:#e1e1e1;"></div>
<div class="b" style="left:455px;top:956px;width:46px;height:1px;background:#c6c6c6;"></div>
<div class="b" style="left:501px;top:956px;width:1234px;height:1px;background:#e1e1e1;"></div>
<div class="b" style="left:455px;top:976px;width:46px;height:1px;background:#c6c6c6;"></div>
<div class="b" style="left:501px;top:976px;width:1234px;height:1px;background:#e1e1e1;"></div>
<div class="b" style="left:455px;top:996px;width:46px;height:1px;background:#c6c6c6;"></div>
<div class="b" style="left:501px;top:996px;width:1234px;height:1px;background:#e1e1e1;"></div>
<div class="b" style="left:455px;top:1016px;width:46px;height:1px;background:#c6c6c6;"></div>
<div class="b" style="left:501px;top:1016px;width:1234px;height:1px;background:#e1e1e1;"></div>
<div class="b" style="left:455px;top:1036px;width:46px;height:1px;background:#c6c6c6;"></div>
<div class="b" style="left:501px;top:1036px;width:1234px;height:1px;background:#e1e1e1;"></div>
<div class="b" style="left:455px;top:632px;width:46px;height:5px;background:#bdbdbd;"></div>
<div class="b" style="left:501px;top:632px;width:1247px;height:5px;background:#dadfe8;"></div>
<span class="t" style="top:591.7px;font-size:11.5px;line-height:16px;color:#5f6368;left:546.7px;">A</span>
<span class="t" style="top:591.7px;font-size:11.5px;line-height:16px;color:#5f6368;left:646.2px;">B</span>
<span class="t" style="top:591.7px;font-size:11.5px;line-height:16px;color:#5f6368;left:753.3px;">C</span>
<span class="t" style="top:591.7px;font-size:11.5px;line-height:16px;color:#5f6368;left:860.8px;">D</span>
<span class="t" style="top:591.7px;font-size:11.5px;line-height:16px;color:#5f6368;left:971.2px;">E</span>
<span class="t" style="top:591.7px;font-size:11.5px;line-height:16px;color:#5f6368;left:1111.5px;">F</span>
<span class="t" style="top:591.7px;font-size:11.5px;line-height:16px;color:#5f6368;left:1245.5px;">G</span>
<span class="t" style="top:591.7px;font-size:11.5px;line-height:16px;color:#5f6368;left:1355.8px;">H</span>
<span class="t" style="top:591.7px;font-size:11.5px;line-height:16px;color:#5f6368;left:1468.4px;">I</span>
<span class="t" style="top:591.7px;font-size:11.5px;line-height:16px;color:#5f6368;left:1562.1px;">J</span>
<span class="t" style="top:591.7px;font-size:11.5px;line-height:16px;color:#5f6368;left:1651.7px;">K</span>
<span class="t" style="top:614.3px;font-size:11.5px;line-height:16px;color:#5f6368;left:474.4px;">1</span>
<span class="t" style="top:637.7px;font-size:11.5px;line-height:16px;color:#5f6368;left:474.4px;">2</span>
<span class="t" style="top:657.7px;font-size:11.5px;line-height:16px;color:#5f6368;left:474.4px;">3</span>
<span class="t" style="top:677.7px;font-size:11.5px;line-height:16px;color:#5f6368;left:474.4px;">4</span>
<span class="t" style="top:697.7px;font-size:11.5px;line-height:16px;color:#5f6368;left:474.4px;">5</span>
<span class="t" style="top:717.7px;font-size:11.5px;line-height:16px;color:#5f6368;left:474.4px;">6</span>
<span class="t" style="top:737.7px;font-size:11.5px;line-height:16px;color:#5f6368;left:474.4px;">7</span>
<span class="t" style="top:757.7px;font-size:11.5px;line-height:16px;color:#5f6368;left:474.4px;">8</span>
<span class="t" style="top:777.7px;font-size:11.5px;line-height:16px;color:#5f6368;left:474.4px;">9</span>
<span class="t" style="top:797.7px;font-size:11.5px;line-height:16px;color:#5f6368;left:471.3px;letter-spacing:-0.192px;">10</span>
<span class="t" style="top:817.7px;font-size:11.5px;line-height:16px;color:#5f6368;left:471.7px;letter-spacing:-0.179px;">11</span>
<span class="t" style="top:837.7px;font-size:11.5px;line-height:16px;color:#5f6368;left:471.3px;letter-spacing:-0.192px;">12</span>
<span class="t" style="top:857.7px;font-size:11.5px;line-height:16px;color:#5f6368;left:471.3px;letter-spacing:-0.192px;">13</span>
<span class="t" style="top:877.7px;font-size:11.5px;line-height:16px;color:#5f6368;left:471.3px;letter-spacing:-0.192px;">14</span>
<span class="t" style="top:897.7px;font-size:11.5px;line-height:16px;color:#5f6368;left:471.3px;letter-spacing:-0.192px;">15</span>
<span class="t" style="top:917.7px;font-size:11.5px;line-height:16px;color:#5f6368;left:471.3px;letter-spacing:-0.192px;">16</span>
<span class="t" style="top:937.7px;font-size:11.5px;line-height:16px;color:#5f6368;left:471.3px;letter-spacing:-0.192px;">17</span>
<span class="t" style="top:957.7px;font-size:11.5px;line-height:16px;color:#5f6368;left:471.3px;letter-spacing:-0.192px;">18</span>
<span class="t" style="top:977.7px;font-size:11.5px;line-height:16px;color:#5f6368;left:471.3px;letter-spacing:-0.192px;">19</span>
<span class="t" style="top:997.7px;font-size:11.5px;line-height:16px;color:#5f6368;left:471.3px;letter-spacing:-0.192px;">20</span>
<span class="t" style="top:1017.7px;font-size:11.5px;line-height:16px;color:#5f6368;left:471.3px;letter-spacing:-0.192px;">21</span>
<span class="t" style="top:615.0px;font-size:13px;line-height:18px;color:#111;left:504.0px;letter-spacing:-0.406px;font-weight:700;">PO #</span>
<span class="t" style="top:615.0px;font-size:13px;line-height:18px;color:#111;left:604.0px;letter-spacing:-0.886px;font-weight:700;">SLT #</span>
<span class="t" style="top:615.0px;font-size:13px;line-height:18px;color:#111;left:704.0px;letter-spacing:-0.079px;font-weight:700;">Container Info</span>
<span class="t" style="top:615.0px;font-size:13px;line-height:18px;color:#111;left:819.0px;letter-spacing:-0.845px;font-weight:700;">ETA</span>
<span class="t" style="top:615.0px;font-size:13px;line-height:18px;color:#111;left:919.0px;letter-spacing:-0.982px;font-weight:700;">SKU</span>
<span class="t" style="top:615.0px;font-size:13px;line-height:18px;color:#111;left:1039.0px;letter-spacing:-0.138px;font-weight:700;">Description</span>
<span class="t" style="top:615.0px;font-size:13px;line-height:18px;color:#111;left:1199.0px;letter-spacing:-0.272px;font-weight:700;">Carton QTY</span>
<span class="t" style="top:615.0px;font-size:13px;line-height:18px;color:#111;left:1309.0px;letter-spacing:-0.230px;font-weight:700;">QTY in carton</span>
<span class="t" style="top:615.0px;font-size:13px;line-height:18px;color:#111;left:1419.0px;letter-spacing:0.118px;font-weight:700;">Unit Qty</span>
<span class="t" style="top:615.0px;font-size:13px;line-height:18px;color:#111;left:1529.0px;letter-spacing:0.724px;font-weight:700;">UOM</span>
<span class="t" style="top:639.2px;font-size:13px;line-height:18px;color:#222;left:504.3px;letter-spacing:-0.072px;">PO-0013873</span>
<span class="t" style="top:639.2px;font-size:13px;line-height:18px;color:#222;left:1514.5px;">1</span>
<span class="t" style="top:658.8px;font-size:13px;line-height:18px;color:#111;left:1295.0px;font-weight:700;">0</span>
<span class="t" style="top:658.8px;font-size:13px;line-height:18px;color:#111;left:1514.5px;font-weight:700;">1</span>
<div class="b" style="left:501px;top:612px;width:100px;height:21px;border:2px solid #1a73e8;"></div>
<div class="b" style="left:597px;top:630px;width:7px;height:7px;background:#1a73e8;border:1px solid #fff;"></div>
<div class="b" style="left:1735px;top:589px;width:13px;height:451px;background:#fff;border-left:1px solid #e1e1e1;"></div>
<div class="b" style="left:1735px;top:632px;width:13px;height:5px;background:#dadfe8;"></div>
<div class="b" style="left:1738px;top:638px;width:8px;height:26px;background:#c9c9c9;border-radius:4px;"></div>
<div class="b" style="left:1747px;top:526px;width:1px;height:514px;background:#e0e0e0;"></div>
<div class="b" style="left:1748px;top:526px;width:55px;height:514px;background:#fff;"></div>
<svg class="i" style="left:1766px;top:544px" width="19" height="19" viewBox="0 0 19 19"><rect x="0" y="0" width="19" height="19" rx="2" fill="#4285f4"/><rect x="0" y="14.500" width="14.500" height="4.500" fill="#34a853"/><rect x="14.500" y="0" width="4.500" height="14.500" fill="#fbbc04"/><path d="M14.500 19L19 14.500h-4.500z" fill="#ea4335"/><rect x="14.500" y="14.500" width="0" height="0"/><rect x="4" y="4" width="10.500" height="10.500" fill="#fff"/><text x="9.300" y="12.400" font-size="8.5" font-weight="bold" font-family="Liberation Sans,sans-serif" fill="#4285f4" text-anchor="middle">31</text></svg>
<svg class="i" style="left:1766px;top:600px" width="19" height="19" viewBox="0 0 19 19"><rect width="19" height="19" rx="2" fill="#fbbc04"/><circle cx="9.500" cy="8" r="3.600" fill="#fff"/><rect x="7.700" y="12.600" width="3.600" height="1.400" fill="#fff"/></svg>
<svg class="i" style="left:1766px;top:656.500px" width="19" height="19" viewBox="0 0 19 19"><circle cx="9.500" cy="9.500" r="9.500" fill="#4285f4"/><circle cx="5" cy="9.500" r="1.700" fill="#fbbc04"/><path d="M7.500 13.500L14 5.500" stroke="#fff" stroke-width="2.600" stroke-linecap="round"/></svg>
<div class="b" style="left:1766px;top:710px;width:20px;height:1px;background:#dadce0;"></div>
<svg class="i" style="left:1769px;top:748px" width="14" height="14" viewBox="0 0 14 14"><path d="M7 1v12M1 7h12" stroke="#777" stroke-width="1.700" fill="none"/></svg>
</div></body></html>
